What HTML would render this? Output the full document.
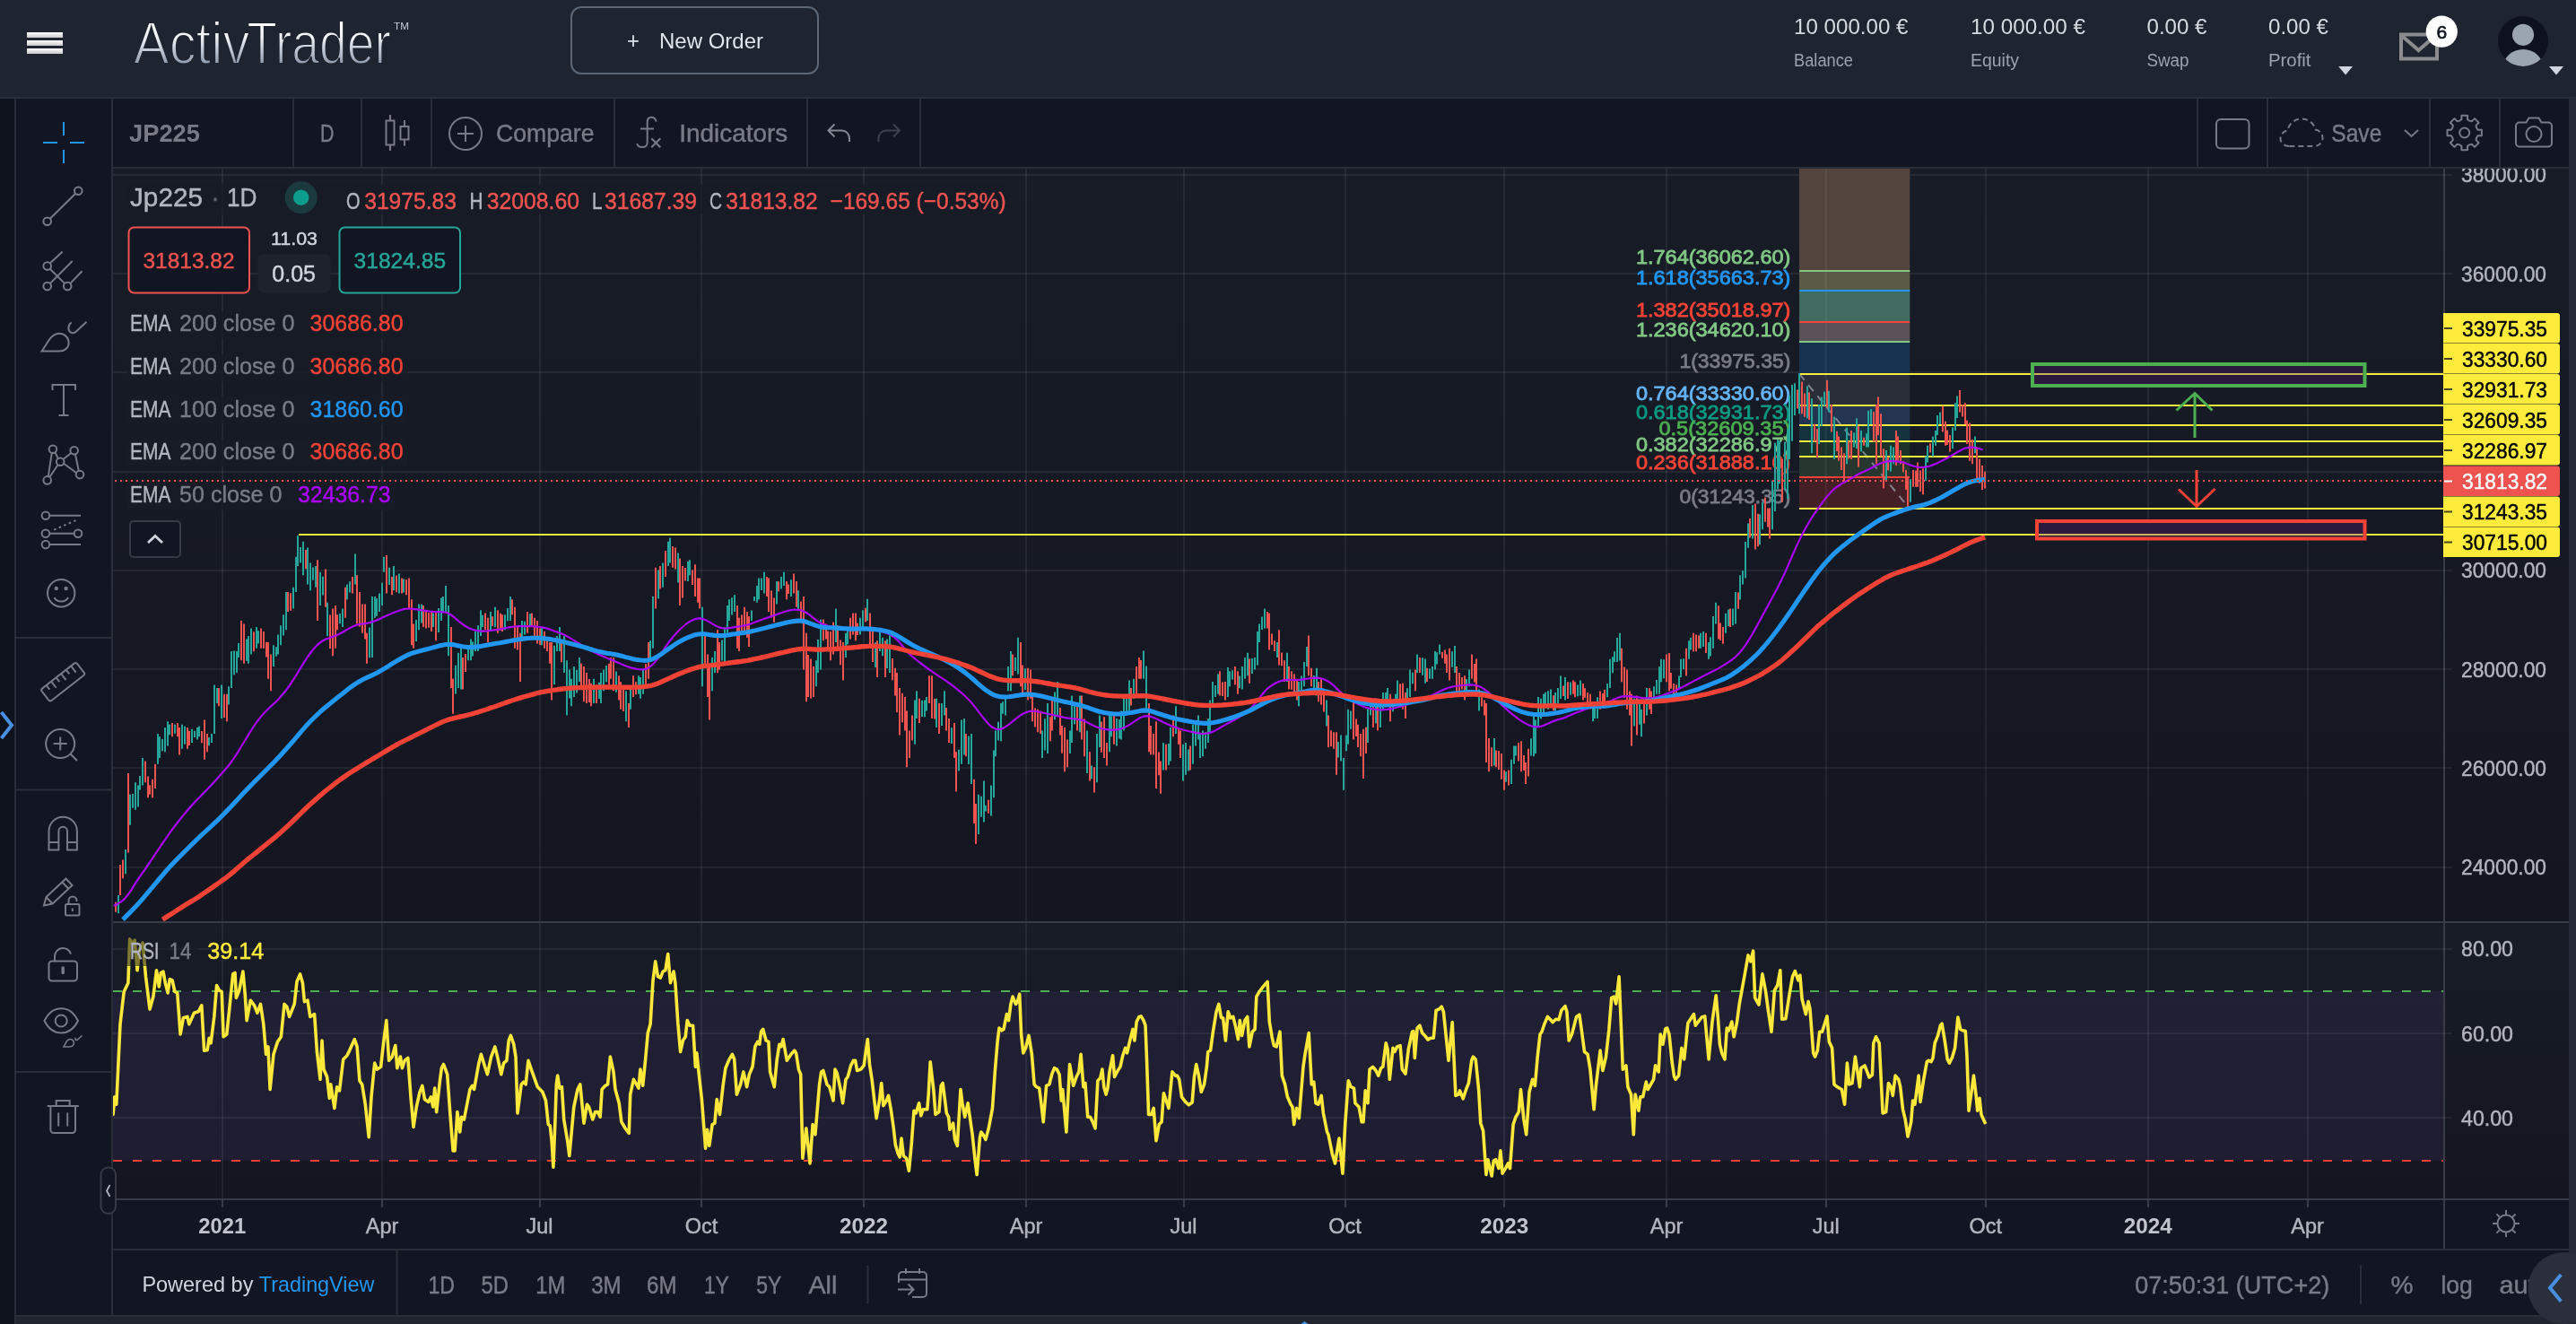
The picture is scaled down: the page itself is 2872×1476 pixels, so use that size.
<!DOCTYPE html>
<html><head><meta charset="utf-8"><title>ActivTrader</title>
<style>html,body{margin:0;padding:0;background:#121622;overflow:hidden}svg{display:block;filter:blur(0px);width:2872px;height:1476px}@media (min-resolution:1.5dppx){svg{width:1436px;height:738px}}text{white-space:pre}</style>
</head><body>
<svg width="2872" height="1476" viewBox="0 0 2872 1476" font-family='"Liberation Sans", sans-serif'>
<defs><linearGradient id="lg" gradientUnits="userSpaceOnUse" x1="0" y1="24" x2="0" y2="73"><stop offset="0" stop-color="#ffffff"/><stop offset="0.35" stop-color="#f2f4f8"/><stop offset="1" stop-color="#8794a9"/></linearGradient><linearGradient id="hb" x1="0" y1="0" x2="0" y2="1"><stop offset="0" stop-color="#ffffff"/><stop offset="1" stop-color="#c9c9c9"/></linearGradient><clipPath id="cpm"><rect x="126" y="188" width="2598" height="839"/></clipPath><clipPath id="cpr"><rect x="126" y="1029" width="2598" height="307"/></clipPath><linearGradient id="pg" x1="0" y1="0" x2="0" y2="1"><stop offset="0" stop-color="#181c27"/><stop offset="1" stop-color="#131621"/></linearGradient><clipPath id="cpax"><rect x="2726" y="188" width="138" height="839"/></clipPath><clipPath id="cpa"><circle cx="2813" cy="46" r="28"/></clipPath></defs>
<rect width="2872" height="1476" fill="#121622"/>
<rect x="0" y="0" width="2872" height="108" fill="#1f2530"/>
<rect x="0" y="108" width="2872" height="2" fill="#2a2e39"/>
<rect x="0" y="110" width="16" height="1366" fill="#0e121c"/>
<rect x="16" y="110" width="2" height="1366" fill="#2a2e39"/>
<rect x="126" y="188" width="2738" height="840" fill="url(#pg)"/>
<rect x="126" y="1028" width="2738" height="310" fill="url(#pg)"/>
<rect x="2864" y="110" width="8" height="1366" fill="#262b37"/>
<rect x="18" y="1468" width="2854" height="8" fill="#20252f"/>
<path d="M1450.500 1476l4-3 4 3z" fill="#4a90e2"/>
<rect x="30" y="36" width="40" height="6" fill="url(#hb)"/>
<rect x="30" y="45" width="40" height="6" fill="url(#hb)"/>
<rect x="30" y="54" width="40" height="6" fill="url(#hb)"/>
<text x="148.8" y="71.3" font-size="66.5" fill="url(#lg)" stroke="#1f2530" stroke-width="2" textLength="129.5" lengthAdjust="spacingAndGlyphs" style="paint-order:fill stroke">Activ</text>
<text x="275.3" y="71.3" font-size="66.5" fill="url(#lg)" stroke="#1f2530" stroke-width="2" textLength="160.5" lengthAdjust="spacingAndGlyphs" style="paint-order:fill stroke">Trader</text>
<text x="439.0" y="33.0" font-size="11" fill="#c9ced8" textLength="17.0" lengthAdjust="spacingAndGlyphs">TM</text>
<rect x="637" y="8" width="275" height="74" rx="11" fill="none" stroke="#5b6676" stroke-width="2"/>
<text x="699.0" y="54.0" font-size="26" fill="#dfe3ea" textLength="14.0" lengthAdjust="spacingAndGlyphs">+</text>
<text x="735.0" y="54.0" font-size="24" fill="#dfe3ea" textLength="116.0" lengthAdjust="spacingAndGlyphs">New Order</text>
<text x="2000.0" y="38.0" font-size="24" fill="#d5d9e0" textLength="127.5" lengthAdjust="spacingAndGlyphs">10 000.00 €</text>
<text x="2000.0" y="74.0" font-size="20" fill="#9aa3b1" textLength="66.0" lengthAdjust="spacingAndGlyphs">Balance</text>
<text x="2197.0" y="38.0" font-size="24" fill="#d5d9e0" textLength="128.0" lengthAdjust="spacingAndGlyphs">10 000.00 €</text>
<text x="2197.0" y="74.0" font-size="20" fill="#9aa3b1" textLength="54.0" lengthAdjust="spacingAndGlyphs">Equity</text>
<text x="2393.5" y="38.0" font-size="24" fill="#d5d9e0" textLength="67.0" lengthAdjust="spacingAndGlyphs">0.00 €</text>
<text x="2393.5" y="74.0" font-size="20" fill="#9aa3b1" textLength="47.0" lengthAdjust="spacingAndGlyphs">Swap</text>
<text x="2529.0" y="38.0" font-size="24" fill="#d5d9e0" textLength="67.0" lengthAdjust="spacingAndGlyphs">0.00 €</text>
<text x="2529.0" y="74.0" font-size="20" fill="#9aa3b1" textLength="47.5" lengthAdjust="spacingAndGlyphs">Profit</text>
<path d="M2607.2 74h15.8l-7.9 9.6z" fill="#d1d5e0"/>
<path d="M2842 74h16l-8 9.6z" fill="#d1d5e0"/>
<rect x="2677" y="38.5" width="40" height="27" fill="none" stroke="#8b8c8e" stroke-width="4"/>
<path d="M2678 40l18.5 16 18.5-16" fill="none" stroke="#8b8c8e" stroke-width="4"/>
<circle cx="2722.3" cy="35.2" r="17.6" fill="#ffffff"/>
<text x="2722.3" y="42.8" font-size="21" fill="#10131f" stroke="#10131f" stroke-width=".7" text-anchor="middle">6</text>
<circle cx="2813" cy="46" r="28" fill="#0e1220"/>
<g clip-path="url(#cpa)" fill="#9aa5b1"><circle cx="2813" cy="38.8" r="12.1"/><ellipse cx="2813" cy="75" rx="22" ry="20"/></g>
<rect x="126" y="186" width="2738" height="2" fill="#2a2e39"/>
<rect x="326" y="110" width="2" height="76" fill="#2a2e39"/>
<rect x="402" y="110" width="2" height="76" fill="#2a2e39"/>
<rect x="480" y="110" width="2" height="76" fill="#2a2e39"/>
<rect x="684" y="110" width="2" height="76" fill="#2a2e39"/>
<rect x="899" y="110" width="2" height="76" fill="#2a2e39"/>
<rect x="1025" y="110" width="2" height="76" fill="#2a2e39"/>
<rect x="2449" y="110" width="2" height="76" fill="#2a2e39"/>
<rect x="2527" y="110" width="2" height="76" fill="#2a2e39"/>
<rect x="2708" y="110" width="2" height="76" fill="#2a2e39"/>
<rect x="2786" y="110" width="2" height="76" fill="#2a2e39"/>
<text x="144.0" y="158.0" font-size="28" fill="#787b86" font-weight="bold" textLength="79.0" lengthAdjust="spacingAndGlyphs">JP225</text>
<text x="357.0" y="158.0" font-size="28" fill="#787b86" stroke="#787b86" stroke-width="0.45" textLength="15.5" lengthAdjust="spacingAndGlyphs">D</text>
<g fill="none" stroke="#787b86" stroke-width="2"><rect x="430.5" y="134.5" width="9" height="27"/><path d="M435 128v6.5M435 161.5v6.5"/><rect x="446.5" y="141" width="9" height="14.5"/><path d="M451 134v7M451 155.5v7"/></g>
<g fill="none" stroke="#787b86" stroke-width="2"><circle cx="519" cy="149" r="18"/><path d="M510 149h18M519 140v18"/></g>
<text x="553.0" y="158.0" font-size="28" fill="#787b86" stroke="#787b86" stroke-width="0.45" textLength="109.5" lengthAdjust="spacingAndGlyphs">Compare</text>
<g fill="none" stroke="#787b86" stroke-width="2"><path d="M731.6 135.7C731 132 728.5 130.7 726 130.7C723 130.7 721.7 133 721.7 136.5V158.5C721.7 162.5 719 164.1 716 164.1C713 164.1 710.8 162.5 710.2 160"/><path d="M714 143.500h15"/><path d="M726.300 154.200l10 10M736.300 154.200l-10 10" stroke-width="2.2"/></g>
<text x="757.3" y="158.0" font-size="28" fill="#787b86" stroke="#787b86" stroke-width="0.45" textLength="121.0" lengthAdjust="spacingAndGlyphs">Indicators</text>
<path d="M930.500 138.500l-7 7 7 7M924 145.500h14c5.500 0 9 4 9 9v3.500" fill="none" stroke="#868993" stroke-width="2"/>
<path d="M996 138.500l7 7-7 7M1002.500 145.500h-14c-5.500 0-9 4-9 9v3.500" fill="none" stroke="#3d414d" stroke-width="2"/>
<rect x="2471" y="133" width="36.5" height="32.5" rx="5" fill="none" stroke="#787b86" stroke-width="2"/>
<path d="M2552 163c-6 0-9.500-4-9.500-8.500 0-5 4-8.500 8-9 1.500-8 8-13 15.500-13 8 0 14 5 15.500 12 5 1 8 4.500 8 9.500 0 5-4 9-9.500 9z" fill="none" stroke="#787b86" stroke-width="2" stroke-dasharray="6 4"/>
<text x="2599.3" y="158.0" font-size="28" fill="#787b86" stroke="#787b86" stroke-width="0.45" textLength="56.0" lengthAdjust="spacingAndGlyphs">Save</text>
<path d="M2681 145l7.500 7 7.500-7" fill="none" stroke="#787b86" stroke-width="2"/>
<path d="M2742.2 134.6L2744.4 133.2L2744.4 128.8L2751.0 128.8L2751.0 133.2L2753.2 134.6L2753.3 134.6L2755.8 135.2L2759.0 132.1L2763.6 136.7L2760.5 139.9L2761.1 142.4L2761.1 142.5L2762.5 144.7L2766.9 144.7L2766.9 151.3L2762.5 151.3L2761.1 153.5L2761.1 153.6L2760.5 156.1L2763.6 159.3L2759.0 163.9L2755.8 160.8L2753.3 161.4L2753.2 161.4L2751.0 162.8L2751.0 167.2L2744.4 167.2L2744.4 162.8L2742.2 161.4L2742.1 161.4L2739.6 160.8L2736.4 163.9L2731.8 159.3L2734.9 156.1L2734.3 153.6L2734.3 153.5L2732.9 151.3L2728.5 151.3L2728.5 144.7L2732.9 144.7L2734.3 142.5L2734.3 142.4L2734.9 139.9L2731.8 136.7L2736.4 132.1L2739.6 135.2L2742.1 134.6z" fill="none" stroke="#787b86" stroke-width="2" stroke-linejoin="round"/>
<circle cx="2747.7" cy="148" r="5.500" fill="none" stroke="#787b86" stroke-width="2"/>
<path d="M2809 136.500h7.500l3-5h11l3 5h7.500a4 4 0 0 1 4 4v19a4 4 0 0 1-4 4h-32a4 4 0 0 1-4-4v-19a4 4 0 0 1 4-4z" fill="none" stroke="#787b86" stroke-width="2"/>
<circle cx="2825" cy="149.500" r="8.500" fill="none" stroke="#787b86" stroke-width="2"/>
<rect x="124" y="110" width="2" height="1356" fill="#2a2e39"/>
<rect x="18" y="710" width="106" height="2" fill="#2a2e39"/>
<rect x="18" y="879.5" width="106" height="2" fill="#2a2e39"/>
<rect x="18" y="1194" width="106" height="2" fill="#2a2e39"/>
<path d="M71 136v15M71 167v15M48 159h16M78 159h16" stroke="#2196f3" stroke-width="2" fill="none"/>
<g fill="none" stroke="#787b86" stroke-width="2"><circle cx="87.300" cy="212.800" r="4.300"/><circle cx="52.700" cy="246.700" r="4.300"/><path d="M84.200 215.800L55.800 243.700"/></g>
<g fill="none" stroke="#787b86" stroke-width="2"><circle cx="52.700" cy="296.600" r="4.300"/><circle cx="52.700" cy="319.100" r="4.300"/><circle cx="75.200" cy="319.100" r="4.300"/><path d="M55.700 293.600L69.700 280.500M55.700 316.100L80.700 291M78.200 316.100L91.500 302.300M55.700 299.800L72.200 316.100"/></g>
<g fill="none" stroke="#787b86" stroke-width="2"><path d="M46.500 391.500H66C73 391.500 77.500 386.500 76.500 380.500C75.500 374.500 70 371 64 372C56 373.500 53 383 46.500 391.500Z"/><path d="M79.700 359.500C75.500 362 75 369 80 371C82 371.800 84 370.500 85.500 369L96.500 358.700"/></g>
<g fill="none" stroke="#787b86" stroke-width="2"><path d="M58.500 435v-6h25.500v6M71 429v34M65.500 463h11"/></g>
<g fill="none" stroke="#787b86" stroke-width="2"><circle cx="58.900" cy="500.800" r="4.300"/><circle cx="82.700" cy="502.300" r="4.300"/><circle cx="67.200" cy="514.800" r="4.300"/><circle cx="52.700" cy="535.400" r="4.300"/><circle cx="89" cy="529.100" r="4.300"/><path d="M57.800 505L53.800 531.200M61.500 504.300L64.800 511.300M70.500 512L79.300 505M84 506.500L87.800 525M71 516.800L85 527M64.500 518.300L55.300 532"/></g>
<g fill="none" stroke="#787b86" stroke-width="2"><circle cx="50.900" cy="574.800" r="4.300"/><circle cx="50.900" cy="594.800" r="4.300"/><circle cx="87" cy="594.800" r="4.300"/><circle cx="50.900" cy="607.100" r="4.300"/><path d="M55.200 574.800H90M55.200 594.800H82.700M55.200 607.100H90"/><path d="M60.200 590.600L86.500 579.300" stroke-dasharray="2.500 3.500"/></g>
<g fill="none" stroke="#787b86" stroke-width="2"><circle cx="68.200" cy="661.300" r="15.200"/><path d="M60.500 666c3 6 12.500 6 15.500 0"/></g><circle cx="62.800" cy="656" r="2.200" fill="#787b86"/><circle cx="73.600" cy="656" r="2.200" fill="#787b86"/>
<g fill="none" stroke="#787b86" stroke-width="2" transform="translate(70.200 760.200) rotate(-38)"><rect x="-25" y="-8.500" width="50" height="17" rx="2.500"/><path d="M-17 -8.500v6M-10 -8.500v9M-3 -8.500v6M4 -8.500v9M11 -8.500v6M18 -8.500v9"/></g>
<g fill="none" stroke="#787b86" stroke-width="2"><circle cx="67.200" cy="829.100" r="16"/><path d="M59.700 829.100h15M67.200 821.600v15M78.800 840.700L86 848"/></g>
<g fill="none" stroke="#787b86" stroke-width="2"><path d="M54.500 947.500v-21a15.700 15.700 0 0 1 31.400 0v21h-10.900v-21a4.800 4.800 0 0 0-9.600 0v21z"/><path d="M54.500 939h10.900M75 939h10.900"/></g>
<g fill="none" stroke="#787b86" stroke-width="2"><path d="M49 1009.500l2.500-9.500 22-20.500 7 7.500-22 20.500z"/><path d="M51.500 1000l7 7.500M69.500 983.500l7 7.500"/><rect x="73" y="1008" width="15.500" height="12.500" rx="1.500" fill="#121622"/><path d="M76.500 1008v-4a4.500 4.500 0 0 1 9 0v1"/><path d="M80.800 1012.500v3.500"/></g>
<g fill="none" stroke="#787b86" stroke-width="2"><rect x="54.500" y="1071.500" width="31.500" height="22" rx="3.500"/><path d="M61 1071.500v-5.500a9.200 9.200 0 0 1 18 -2.500"/><path d="M70.200 1079v5.500" stroke-width="3.500" stroke-linecap="round"/></g>
<g fill="none" stroke="#787b86" stroke-width="2"><path d="M49.500 1138c9-18.500 28.500-18.500 37.500 0-9 18-28.500 18-37.500 0z"/><circle cx="68.200" cy="1138" r="6.500"/><path d="M71 1167h6.500c4.500 0 5.500-3.500 4.500-6-1.500-3.500-5.500-3-7.500-0.500z" stroke-width="1.600"/><path d="M84.500 1157c-1.500 1 0 3.500 2 2l5-4.500" stroke-width="1.600"/></g>
<g fill="none" stroke="#787b86" stroke-width="2"><path d="M52.700 1233h35.100M62.700 1233v-6h15v6M56.400 1233v26.500a3.500 3.500 0 0 0 3.500 3.500h20.600a3.500 3.500 0 0 0 3.500-3.500v-26.500M65.200 1240.500v15M75.200 1240.500v15"/></g>
<path d="M1.500 794l11.500 14.500-11.500 14.500" fill="none" stroke="#4a90e2" stroke-width="4"/>
<rect x="126" y="1027" width="2738" height="2" fill="#383c48"/>
<rect x="126" y="1336" width="2738" height="2" fill="#383c48"/>
<rect x="126" y="1392" width="2738" height="2" fill="#2a2e39"/>
<rect x="2724" y="188" width="2" height="1204" fill="#383c48"/>
<rect x="126" y="1338" width="2738" height="54" fill="#121622"/>
<rect x="126" y="1394" width="2738" height="72" fill="#121622"/>
<rect x="2724" y="1338" width="2" height="54" fill="#383c48"/>
<rect x="18" y="1466" width="2846" height="2" fill="#2a2e39"/>
<path d="M248 1338V1346M426 1338V1346M602 1338V1346M782 1338V1346M963 1338V1346M1144 1338V1346M1320 1338V1346M1500 1338V1346M1677 1338V1346M1858 1338V1346M2036 1338V1346M2214 1338V1346M2395 1338V1346M2573 1338V1346" stroke="#383c48" stroke-width="2" fill="none"/>
<rect x="126" y="1105.0" width="2598" height="188.7" fill="#7e57c2" fill-opacity="0.1"/>
<path d="M248 188V1027M248 1029V1336M426 188V1027M426 1029V1336M602 188V1027M602 1029V1336M782 188V1027M782 1029V1336M963 188V1027M963 1029V1336M1144 188V1027M1144 1029V1336M1320 188V1027M1320 1029V1336M1500 188V1027M1500 1029V1336M1677 188V1027M1677 1029V1336M1858 188V1027M1858 1029V1336M2036 188V1027M2036 1029V1336M2214 188V1027M2214 1029V1336M2395 188V1027M2395 1029V1336M2573 188V1027M2573 1029V1336" stroke="#ffffff" stroke-opacity="0.062" stroke-width="2" fill="none"/>
<path d="M126 967H2734M126 856H2734M126 746H2734M126 636H2734M126 526H2734M126 415H2734M126 305H2734M126 195H2734M126 1058H2734M126 1152H2734M126 1246H2734" stroke="#ffffff" stroke-opacity="0.062" stroke-width="2" fill="none"/>
<path d="M126 1105H2724" stroke="#4caf50" stroke-width="2" stroke-dasharray="10 12" fill="none"/>
<path d="M126 1294H2724" stroke="#f44336" stroke-width="2" stroke-dasharray="10 12" fill="none"/>
<g clip-path="url(#cpm)">
<rect x="2006" y="188.0" width="123.3" height="113.7" fill="#53453d"/>
<rect x="2006" y="301.7" width="123.3" height="22.0" fill="#5a5b47"/>
<rect x="2006" y="323.7" width="123.3" height="35.5" fill="#416a62"/>
<rect x="2006" y="359.2" width="123.3" height="22.0" fill="#5a5057"/>
<rect x="2006" y="381.2" width="123.3" height="35.5" fill="#17334f"/>
<rect x="2006" y="416.7" width="123.3" height="35.5" fill="#2a2e39"/>
<rect x="2006" y="452.3" width="123.3" height="22.0" fill="#243551"/>
<rect x="2006" y="474.3" width="123.3" height="17.8" fill="#14333f"/>
<rect x="2006" y="492.0" width="123.3" height="17.8" fill="#1d3229"/>
<rect x="2006" y="509.8" width="123.3" height="22.0" fill="#283630"/>
<rect x="2006" y="531.8" width="123.3" height="35.5" fill="#442026"/>
<path d="M2035.800 188V567.4" stroke="#ffffff" stroke-opacity="0.06" stroke-width="2"/>
<path d="M2006 302H2129.3" stroke="#81c784" stroke-width="2"/>
<path d="M2006 324H2129.3" stroke="#2196f3" stroke-width="2"/>
<path d="M2006 359H2129.3" stroke="#f44336" stroke-width="2"/>
<path d="M2006 381H2129.3" stroke="#81c784" stroke-width="2"/>
<path d="M2006 532H2129.3" stroke="#f44336" stroke-width="2"/>
<path d="M2006 416.7L2129.3 567.4" stroke="#9598a1" stroke-width="2" stroke-dasharray="9 7" opacity="0.8"/>
</g>
<text x="1996.4" y="294.2" font-size="22" fill="#81c784" stroke="#81c784" stroke-width="0.8" text-anchor="end" textLength="172.5" lengthAdjust="spacingAndGlyphs">1.764(36062.60)</text>
<text x="1996.4" y="316.8" font-size="22" fill="#2196f3" stroke="#2196f3" stroke-width="0.8" text-anchor="end" textLength="172.5" lengthAdjust="spacingAndGlyphs">1.618(35663.73)</text>
<text x="1996.4" y="353.0" font-size="22" fill="#f44336" stroke="#f44336" stroke-width="0.8" text-anchor="end" textLength="172.5" lengthAdjust="spacingAndGlyphs">1.382(35018.97)</text>
<text x="1996.4" y="374.8" font-size="22" fill="#81c784" stroke="#81c784" stroke-width="0.8" text-anchor="end" textLength="172.5" lengthAdjust="spacingAndGlyphs">1.236(34620.10)</text>
<text x="1996.4" y="409.6" font-size="22" fill="#787b86" stroke="#787b86" stroke-width="0.8" text-anchor="end" textLength="124.0" lengthAdjust="spacingAndGlyphs">1(33975.35)</text>
<text x="1996.4" y="445.8" font-size="22" fill="#64b5f6" stroke="#64b5f6" stroke-width="0.8" text-anchor="end" textLength="172.5" lengthAdjust="spacingAndGlyphs">0.764(33330.60)</text>
<text x="1996.4" y="467.1" font-size="22" fill="#089981" stroke="#089981" stroke-width="0.8" text-anchor="end" textLength="172.5" lengthAdjust="spacingAndGlyphs">0.618(32931.73)</text>
<text x="1996.4" y="484.9" font-size="22" fill="#4caf50" stroke="#4caf50" stroke-width="0.8" text-anchor="end" textLength="147.0" lengthAdjust="spacingAndGlyphs">0.5(32609.35)</text>
<text x="1996.4" y="503.0" font-size="22" fill="#81c784" stroke="#81c784" stroke-width="0.8" text-anchor="end" textLength="172.5" lengthAdjust="spacingAndGlyphs">0.382(32286.97)</text>
<text x="1996.4" y="523.3" font-size="22" fill="#f44336" stroke="#f44336" stroke-width="0.8" text-anchor="end" textLength="172.5" lengthAdjust="spacingAndGlyphs">0.236(31888.10)</text>
<text x="1996.4" y="560.9" font-size="22" fill="#787b86" stroke="#787b86" stroke-width="0.8" text-anchor="end" textLength="124.0" lengthAdjust="spacingAndGlyphs">0(31243.35)</text>
<g clip-path="url(#cpm)">
<path d="M2006 417H2724M2006 452H2724M2006 474H2724M2006 492H2724M2006 509H2724M2006 567H2724M333 596H2724" stroke="#ffeb3b" stroke-width="2" fill="none"/>
<path d="M132 997.9V1018.3M140 947.0V974.2M145 885.8V919.8M148 884.9V900.7M151 872.2V902.8M154 875.6V899.4M156 865.1V880.4M159 845.0V875.6M176 817.9V851.8M178 821.3V845.0M181 824.0V837.3M184 811.1V838.2M187 804.3V831.4M189 807.8V819.3M195 807.8V817.7M203 807.7V834.8M206 809.8V829.8M214 812.8V828.0M217 814.8V821.9M220 811.1V824.6M222 809.4V821.3M233 822.0V831.3M236 817.9V828.0M239 763.5V817.9M242 766.9V783.9M247 763.5V800.9M255 765.2V785.6M258 726.1V766.9M261 725.4V752.3M264 726.1V749.9M266 717.1V732.9M275 712.6V736.8M277 709.1V739.7M280 700.6V729.5M286 698.9V722.7M288 703.2V717.6M305 719.3V743.1M308 721.2V731.7M310 707.4V729.5M313 697.2V719.3M316 685.3V708.6M319 659.9V702.3M327 654.8V678.5M330 620.8V659.9M332 597.0V631.0M335 610.1V627.6M338 603.8V641.2M343 610.6V651.4M346 627.6V658.2M349 632.4V646.7M352 631.0V654.8M357 637.8V675.1M360 642.8V663.4M365 671.7V709.1M379 683.9V695.3M382 678.5V698.9M387 651.4V668.3M390 648.3V660.5M396 617.4V651.4M412 699.6V733.2M415 664.9V732.9M418 664.9V688.7M420 666.9V686.7M423 661.5V681.9M426 649.7V675.1M428 620.8V637.8M434 632.8V651.9M439 631.0V658.2M445 639.5V661.5M450 645.5V660.5M464 691.0V714.9M467 673.4V702.3M470 673.7V694.6M483 683.6V698.9M489 678.1V704.9M492 666.6V692.1M494 664.9V681.9M497 653.1V681.9M500 675.1V731.2M508 741.7V773.4M511 727.8V766.9M514 721.0V768.6M522 719.3V736.3M525 712.5V736.3M527 715.6V731.4M530 704.0V726.1M533 697.2V726.1M536 680.2V709.1M538 685.7V699.0M547 681.9V702.3M552 676.8V698.9M563 685.3V702.3M566 678.1V692.3M569 664.9V692.1M582 692.1V712.5M585 692.7V707.4M591 684.3V697.4M604 698.9V719.3M618 719.8V763.0M621 709.1V726.1M624 698.9V726.1M629 709.1V749.9M632 736.3V797.5M635 746.6V778.5M637 756.7V787.3M640 743.1V777.1M643 746.9V772.6M646 732.9V760.1M662 756.7V783.9M668 760.8V779.0M670 749.9V783.9M673 746.5V770.3M676 741.9V760.3M687 748.6V771.8M698 770.3V804.3M703 766.9V790.7M712 753.3V773.7M714 755.0V778.8M717 746.5V773.7M725 714.2V732.9M728 664.9V722.7M734 635.6V667.3M739 627.6V654.8M745 603.8V631.0M747 599.7V627.6M756 616.4V649.4M767 625.9V648.0M769 624.2V641.2M783 676.8V765.2M794 732.9V770.3M797 726.1V749.9M805 713.6V736.6M808 698.9V739.7M811 675.1V705.7M813 668.3V692.1M816 666.2V685.4M819 663.2V681.9M838 680.4V691.9M841 664.9V670.0M844 653.1V671.7M846 644.6V668.3M849 644.6V657.9M852 637.8V661.5M866 648.0V673.4M871 642.9V656.5M874 637.8V653.1M882 646.3V664.9M890 658.2V680.2M910 736.3V765.2M912 713.1V750.1M915 690.4V746.5M932 678.5V715.9M943 705.7V732.9M945 699.3V718.2M959 688.7V707.4M962 680.2V698.9M967 667.7V692.1M976 716.3V744.0M981 702.3V726.1M984 710.8V731.2M989 712.5V745.0M992 705.7V749.9M1020 780.5V829.7M1022 770.3V800.9M1028 780.8V799.0M1031 780.5V799.2M1033 777.1V792.4M1044 778.8V811.1M1050 784.0V809.0M1053 770.3V797.5M1061 811.3V829.0M1069 835.7V859.6M1072 802.6V851.8M1075 800.9V841.6M1080 820.4V851.9M1083 817.9V873.9M1091 885.8V930.0M1094 887.7V910.8M1097 870.5V916.4M1099 897.7V904.5M1105 875.6V909.6M1108 836.5V889.2M1110 814.5V843.3M1113 804.8V825.6M1116 783.9V826.3M1118 782.2V795.8M1121 777.1V797.5M1124 743.1V770.3M1127 726.1V770.3M1132 732.8V748.0M1135 710.8V751.6M1143 745.3V769.0M1162 814.5V845.0M1165 801.2V836.5M1168 783.9V839.9M1176 771.6V802.2M1179 760.1V797.5M1193 814.5V839.9M1195 775.4V828.0M1198 784.9V807.6M1204 775.4V816.2M1212 814.5V862.0M1217 853.5V868.3M1223 817.9V872.2M1226 797.5V833.1M1237 797.5V838.2M1239 798.3V821.3M1245 800.9V831.4M1248 802.0V823.4M1250 792.4V824.6M1253 775.4V814.5M1256 773.7V797.5M1259 758.4V792.4M1264 756.7V778.8M1275 725.4V756.7M1278 742.4V794.1M1297 828.0V858.6M1303 829.0V852.9M1305 811.1V848.4M1311 787.3V817.9M1319 829.7V870.5M1322 828.0V863.7M1325 835.5V859.5M1330 807.7V851.8M1333 806.3V831.5M1336 797.5V824.6M1338 817.9V845.0M1341 814.5V843.3M1344 816.3V834.7M1347 800.9V828.0M1349 780.5V817.9M1352 760.1V783.9M1355 764.1V777.0M1358 751.6V773.7M1369 744.1V777.1M1371 748.2V765.2M1374 747.2V757.5M1382 753.4V767.2M1385 743.1V768.6M1388 732.9V756.7M1391 727.8V753.3M1396 734.0V750.9M1399 732.9V746.5M1402 704.0V741.4M1404 695.5V715.9M1407 687.6V702.0M1410 678.5V700.6M1424 715.9V732.9M1435 727.8V760.1M1448 760.1V787.3M1451 753.5V773.9M1454 738.0V765.2M1457 721.0V743.1M1465 753.1V768.3M1468 744.8V775.4M1479 780.5V809.4M1492 827.0V844.4M1495 819.6V848.4M1498 845.0V880.7M1501 819.8V837.3M1503 790.7V829.7M1506 792.4V812.8M1525 789.0V828.0M1528 780.5V797.5M1534 780.4V806.2M1539 783.9V811.1M1542 772.0V790.7M1545 771.9V783.1M1547 766.9V783.9M1553 781.1V793.3M1556 773.7V787.3M1558 758.4V783.9M1569 767.2V781.5M1572 746.5V777.1M1575 749.7V762.3M1580 729.5V749.9M1586 733.3V752.7M1589 734.6V761.8M1594 745.6V756.8M1597 743.1V756.7M1600 726.1V746.5M1602 727.2V740.4M1605 718.6V729.5M1619 726.2V743.7M1622 720.0V749.9M1635 757.0V769.7M1638 746.5V765.2M1649 768.6V792.4M1666 822.9V853.5M1679 860.2V871.8M1685 846.7V873.9M1688 831.4V851.8M1690 831.6V842.6M1707 823.3V842.5M1710 797.5V843.3M1712 802.6V839.9M1715 777.1V811.1M1718 778.7V801.3M1721 773.7V794.1M1723 771.7V789.6M1726 770.3V790.7M1729 768.6V789.0M1734 772.0V792.4M1737 766.9V783.9M1740 753.4V778.9M1745 755.1V780.6M1751 760.4V774.7M1759 763.6V776.2M1762 758.5V775.5M1776 784.0V804.3M1778 786.2V801.0M1781 777.2V801.0M1792 761.9V777.2M1795 734.7V767.0M1798 732.2V750.2M1800 726.2V738.1M1803 710.9V738.1M1806 705.8V736.4M1822 778.5V809.5M1828 780.6V807.7M1830 790.8V821.3M1836 767.0V797.6M1844 765.3V780.6M1847 758.0V773.7M1850 743.2V773.8M1852 734.7V760.2M1855 735.2V756.2M1872 753.4V767.0M1874 734.7V755.1M1877 734.2V746.0M1883 714.3V734.7M1885 710.8V724.6M1896 705.8V722.8M1899 704.1V721.1M1905 716.0V734.7M1907 710.3V731.6M1910 687.1V722.8M1913 671.8V695.6M1924 683.7V705.8M1927 679.6V698.0M1932 678.6V697.3M1935 659.9V695.6M1940 641.3V668.4M1943 636.2V651.4M1946 603.9V644.6M1949 583.5V610.7M1954 563.1V600.5M1962 573.3V607.3M1965 559.7V590.3M1976 535.9V590.3M1979 493.4V569.9M1982 490.0V545.3M1984 491.7V539.3M1990 492.4V546.5M1993 478.2V556.3M1995 440.8V512.1M1998 428.9V491.7M2001 427.2V462.9M2006 416.0V461.2M2015 430.6V466.3M2020 444.2V505.3M2028 451.0V495.1M2031 442.5V474.8M2034 436.7V452.6M2039 435.7V459.5M2045 464.6V512.1M2059 476.5V517.2M2067 482.2V498.6M2070 466.3V500.2M2075 479.9V503.6M2081 483.2V498.5M2083 457.8V498.5M2086 456.1V473.1M2103 501.9V535.9M2108 496.8V525.7M2111 498.5V517.2M2130 534.2V559.7M2147 508.7V535.9M2149 496.8V515.5M2155 486.6V508.7M2158 479.9V496.8M2160 462.9V484.9M2163 459.5V473.1M2177 476.5V500.2M2180 449.3V479.9M2182 441.6V466.0M2202 486.6V505.3" stroke="#26a69a" stroke-width="2" fill="none"/>
<path d="M129 1005.8V1016.7M134 964.0V997.9M137 958.4V979.3M143 862.0V950.4M162 848.4V872.2M165 865.4V889.2M167 875.2V885.7M170 868.8V889.2M173 851.8V879.0M192 806.0V821.3M198 806.0V821.3M200 811.1V841.6M209 811.1V834.8M211 814.8V831.1M225 814.9V828.3M228 802.6V846.7M231 817.9V838.2M244 767.1V787.3M250 773.8V800.0M253 773.7V804.3M269 692.1V736.3M272 695.5V739.7M283 704.2V726.3M291 700.6V722.7M294 704.0V722.7M297 715.8V732.6M299 715.9V756.7M302 729.5V770.3M321 659.9V681.9M324 661.3V680.8M341 612.9V634.3M354 624.2V692.1M363 634.4V676.8M368 685.5V722.9M371 678.5V731.2M374 675.1V722.7M376 685.3V702.3M385 654.8V688.7M393 642.9V661.5M398 641.2V695.5M401 660.0V698.5M404 673.4V705.7M407 673.4V712.5M409 705.7V739.7M431 619.1V661.5M437 642.9V663.2M442 641.5V660.3M448 644.6V661.5M453 646.3V663.2M456 644.6V678.5M459 668.3V719.3M461 695.5V722.7M472 675.1V698.9M475 680.2V700.6M478 683.1V699.8M481 681.9V704.0M486 681.9V714.2M503 698.9V766.9M505 756.7V795.8M516 732.9V768.6M519 729.0V748.9M541 683.6V702.3M544 688.7V715.9M549 687.3V698.1M555 680.2V705.7M558 683.7V702.8M560 685.3V704.0M571 668.3V685.3M574 676.8V722.7M577 698.7V724.5M580 705.7V760.1M588 681.9V705.7M593 683.6V698.9M596 688.7V709.1M599 692.1V717.6M602 700.4V718.8M607 704.0V722.7M610 712.3V726.1M613 715.9V739.7M615 715.9V780.5M626 714.0V738.2M648 739.6V765.2M651 743.1V782.2M654 749.9V783.9M657 757.1V783.0M659 761.8V787.3M665 763.5V783.9M679 739.7V763.5M681 732.9V756.7M684 732.9V770.3M690 753.3V780.5M692 760.1V790.7M695 764.0V792.9M701 783.9V811.1M706 753.3V777.1M709 760.0V774.2M720 740.3V763.6M723 715.9V756.7M731 632.7V678.5M736 631.0V656.5M742 614.0V642.9M750 608.9V632.7M753 610.6V634.4M758 622.5V675.1M761 631.0V666.6M764 632.9V647.5M772 635.4V652.1M775 629.3V664.9M778 644.6V671.7M780 644.6V678.5M786 705.8V745.1M789 729.5V777.1M791 739.7V802.6M800 702.3V749.9M802 715.9V746.5M822 675.1V722.7M824 688.7V726.1M827 685.6V705.6M830 676.8V704.0M833 681.9V710.8M835 687.0V721.0M855 642.9V664.9M857 644.6V681.9M860 658.5V688.6M863 666.6V693.8M868 648.2V659.3M877 648.0V668.3M879 651.5V662.0M885 639.5V661.5M888 648.0V676.8M893 670.5V691.5M896 664.9V746.5M899 705.7V782.2M901 730.0V776.9M904 734.6V778.8M907 743.1V777.1M918 690.4V714.2M921 695.5V712.5M923 703.4V725.4M926 704.0V736.3M929 693.8V729.5M934 697.2V721.0M937 713.4V741.3M940 715.9V758.4M948 688.7V712.5M951 683.6V707.4M954 683.6V714.2M956 694.7V707.9M965 677.8V693.6M970 683.6V722.7M973 698.9V738.0M978 714.2V755.0M987 714.2V755.0M995 734.1V758.2M998 744.8V775.4M1000 749.9V794.1M1003 766.9V819.6M1006 772.8V805.3M1009 777.1V814.5M1011 792.4V855.2M1014 814.5V845.0M1017 797.4V825.6M1025 778.8V806.0M1036 753.3V783.9M1039 753.3V800.9M1042 779.0V801.4M1047 783.9V817.9M1055 789.0V814.5M1058 800.9V828.0M1064 806.0V845.0M1066 838.2V882.4M1077 817.9V843.3M1086 868.8V918.1M1088 896.0V940.9M1102 891.8V906.7M1129 729.5V753.3M1138 715.9V765.2M1140 741.4V775.4M1146 744.8V780.5M1149 746.5V778.8M1151 772.0V804.3M1154 789.5V810.5M1157 790.7V816.2M1160 792.4V817.9M1171 799.2V826.3M1173 780.5V814.5M1182 789.0V819.6M1184 809.0V839.7M1187 811.1V860.3M1190 824.6V855.2M1201 783.9V814.5M1206 775.4V824.6M1209 801.5V843.2M1215 838.2V870.5M1220 855.2V883.4M1228 804.4V838.8M1231 799.2V845.0M1234 828.0V853.5M1242 794.1V829.7M1261 767.1V786.5M1267 743.1V775.4M1270 732.9V756.7M1272 736.0V756.8M1281 783.9V838.2M1283 808.9V841.3M1286 817.9V841.6M1289 804.3V879.0M1292 838.4V864.2M1294 848.4V884.8M1300 829.7V858.6M1308 797.5V821.3M1314 812.8V829.7M1316 814.5V845.0M1327 831.4V858.6M1360 748.2V775.4M1363 760.6V776.1M1366 760.1V780.5M1377 743.1V763.5M1380 748.2V773.7M1393 734.6V761.8M1413 681.9V700.6M1415 683.6V724.4M1418 706.5V718.8M1421 714.2V726.1M1426 702.3V741.4M1429 727.4V742.2M1432 736.3V760.1M1437 743.1V768.6M1440 748.2V768.7M1443 751.6V773.7M1446 756.7V780.5M1459 708.4V753.3M1462 744.8V765.2M1470 760.1V782.2M1473 756.7V785.6M1476 769.8V793.4M1481 797.5V833.1M1484 814.3V832.0M1487 816.2V834.8M1490 816.2V863.7M1509 782.2V824.6M1512 801.4V821.0M1514 807.7V833.1M1517 817.9V843.3M1520 812.8V868.1M1523 810.7V840.0M1531 782.2V811.1M1536 783.9V814.5M1550 773.7V804.3M1561 762.3V781.9M1564 761.8V790.7M1567 772.0V800.9M1578 746.5V770.3M1583 732.9V749.9M1591 744.8V760.1M1608 726.8V733.7M1611 724.4V739.7M1613 729.5V749.9M1616 722.7V758.4M1624 743.1V772.0M1627 749.9V770.3M1630 754.9V768.4M1633 753.3V780.5M1641 729.5V756.7M1644 740.0V760.5M1646 734.6V770.3M1652 775.2V787.5M1655 780.5V797.5M1657 783.9V850.1M1660 822.9V860.3M1663 833.3V854.4M1668 836.5V855.2M1671 837.0V858.0M1674 839.9V868.8M1677 858.6V880.7M1682 858.6V875.6M1693 828.0V848.4M1696 826.3V860.3M1699 842.0V859.0M1701 850.1V873.9M1704 834.8V865.4M1732 775.2V792.3M1743 764.5V776.0M1748 760.2V778.9M1754 758.5V773.8M1756 760.2V777.2M1765 761.9V780.6M1767 767.2V777.8M1770 772.1V784.0M1773 773.8V782.3M1784 770.4V790.8M1787 773.0V788.3M1789 768.7V784.0M1808 722.8V760.2M1811 743.6V777.8M1814 746.6V790.8M1817 770.4V797.6M1819 773.8V831.5M1825 775.5V819.6M1833 785.0V806.5M1839 767.0V790.8M1841 770.4V795.9M1858 729.6V760.2M1861 727.9V770.4M1863 749.9V767.8M1866 761.9V777.2M1869 763.6V777.2M1880 722.8V753.4M1888 705.8V726.2M1891 707.5V726.2M1894 708.5V722.8M1902 705.8V727.9M1916 675.2V712.6M1918 694.4V714.0M1921 699.0V717.7M1929 678.6V699.0M1938 660.6V678.7M1951 578.1V599.5M1957 561.4V612.4M1960 572.8V609.2M1968 554.6V581.8M1971 566.5V587.5M1973 566.5V600.5M1987 512.1V559.7M2004 434.4V455.6M2009 425.5V461.2M2012 438.4V464.8M2017 437.4V468.0M2023 472.7V492.6M2026 478.2V510.4M2037 423.8V454.4M2042 451.0V481.5M2048 480.7V502.9M2050 486.6V513.8M2053 498.5V524.0M2056 505.3V537.6M2061 491.8V511.4M2064 479.9V512.1M2072 474.8V520.6M2078 487.7V496.8M2089 459.0V492.5M2092 451.0V517.2M2094 442.5V484.9M2097 461.2V508.7M2100 500.2V544.4M2105 509.5V524.2M2114 479.9V518.9M2116 486.6V513.8M2119 501.9V517.2M2122 514.2V526.3M2125 524.0V546.1M2127 530.8V566.5M2133 524.0V542.7M2136 524.4V542.9M2138 515.5V542.7M2141 524.5V548.0M2144 522.3V551.2M2152 494.2V504.5M2166 452.7V481.5M2169 469.7V496.8M2171 479.6V495.9M2174 484.9V503.6M2185 435.0V459.5M2188 451.0V464.6M2191 449.3V473.1M2193 468.8V495.1M2196 471.4V513.8M2199 490.0V517.2M2204 498.5V534.2M2207 511.6V538.8M2210 518.9V546.1M2213 525.7V544.4" stroke="#ef5350" stroke-width="2" fill="none"/>
<path d="M126.8 1009.8L130.8 1007.8L134.8 1005.4L138.8 1002.1L142.8 997.3L146.8 991.3L150.8 984.9L154.8 978.9L158.8 973.2L162.8 967.5L166.8 961.7L170.8 955.7L174.8 949.7L178.8 943.7L182.8 937.8L186.8 932.0L190.8 926.4L194.8 921.0L198.8 915.8L202.8 910.9L206.8 906.0L210.8 901.3L214.8 896.8L218.8 892.5L222.8 888.4L226.8 884.3L230.8 880.2L234.8 876.0L238.8 871.7L242.8 867.3L246.8 862.8L250.8 858.3L254.8 853.5L258.8 848.2L262.8 842.3L266.8 835.9L270.8 829.3L274.8 822.7L278.8 816.2L282.8 810.0L286.8 804.2L290.8 799.1L294.8 794.5L298.8 790.5L302.8 786.8L306.8 783.1L310.8 779.1L314.8 774.6L318.8 769.7L322.8 764.2L326.8 758.2L330.8 751.8L334.8 745.2L338.8 738.7L342.8 732.5L346.8 727.0L350.8 722.1L354.8 718.0L358.8 715.0L362.8 712.8L366.8 711.3L370.8 709.9L374.8 708.3L378.8 706.5L382.8 704.3L386.8 701.9L390.8 699.7L394.8 697.8L398.8 696.4L402.8 695.7L406.8 695.2L410.8 694.5L414.8 693.4L418.8 691.9L422.8 690.2L426.8 688.3L430.8 686.5L434.8 684.7L438.8 683.0L442.8 681.5L446.8 680.1L450.8 679.0L454.8 678.5L458.8 678.6L462.8 679.1L466.8 679.7L470.8 680.3L474.8 680.9L478.8 681.5L482.8 681.9L486.8 682.1L490.8 682.1L494.8 682.3L498.8 683.3L502.8 685.5L506.8 688.5L510.8 692.0L514.8 695.2L518.8 698.0L522.8 700.2L526.8 701.8L530.8 702.9L534.8 703.4L538.8 703.6L542.8 703.4L546.8 703.0L550.8 702.4L554.8 701.8L558.8 701.1L562.8 700.3L566.8 699.5L570.8 698.8L574.8 698.4L578.8 698.2L582.8 698.1L586.8 698.0L590.8 698.1L594.8 698.3L598.8 698.6L602.8 699.0L606.8 699.8L610.8 700.9L614.8 702.3L618.8 703.7L622.8 705.1L626.8 706.7L630.8 708.6L634.8 710.7L638.8 713.1L642.8 715.6L646.8 718.1L650.8 720.6L654.8 723.0L658.8 725.2L662.8 727.3L666.8 729.3L670.8 731.1L674.8 732.8L678.8 734.5L682.8 736.1L686.8 737.8L690.8 739.5L694.8 741.2L698.8 742.7L702.8 744.1L706.8 745.2L710.8 746.0L714.8 746.4L718.8 746.1L722.8 744.6L726.8 741.7L730.8 737.4L734.8 732.1L738.8 726.1L742.8 720.0L746.8 714.4L750.8 709.4L754.8 705.0L758.8 701.0L762.8 697.5L766.8 694.4L770.8 691.9L774.8 690.2L778.8 689.4L782.8 689.7L786.8 691.2L790.8 693.4L794.8 695.8L798.8 698.1L802.8 699.7L806.8 700.5L810.8 700.4L814.8 699.9L818.8 699.2L822.8 698.6L826.8 698.0L830.8 697.2L834.8 696.2L838.8 694.8L842.8 693.2L846.8 691.7L850.8 690.2L854.8 688.9L858.8 687.5L862.8 686.1L866.8 684.7L870.8 683.3L874.8 682.0L878.8 680.8L882.8 680.0L886.8 679.5L890.8 679.8L894.8 680.9L898.8 682.9L902.8 685.7L906.8 688.9L910.8 691.9L914.8 694.5L918.8 696.4L922.8 697.6L926.8 698.3L930.8 698.8L934.8 699.2L938.8 699.6L942.8 700.0L946.8 700.3L950.8 700.5L954.8 700.6L958.8 700.7L962.8 700.8L966.8 701.1L970.8 701.7L974.8 702.4L978.8 703.3L982.8 704.2L986.8 705.3L990.8 706.7L994.8 708.9L998.8 712.0L1002.8 716.1L1006.8 720.8L1010.8 725.5L1014.8 729.8L1018.8 733.4L1022.8 736.5L1026.8 739.6L1030.8 742.6L1034.8 745.5L1038.8 748.4L1042.8 751.2L1046.8 753.8L1050.8 756.4L1054.8 759.1L1058.8 761.9L1062.8 764.9L1066.8 768.1L1070.8 771.4L1074.8 774.9L1078.8 778.7L1082.8 783.0L1086.8 787.9L1090.8 793.1L1094.8 798.3L1098.8 803.3L1102.8 807.8L1106.8 811.1L1110.8 813.0L1114.8 813.1L1118.8 811.6L1122.8 809.1L1126.8 806.0L1130.8 802.7L1134.8 799.5L1138.8 796.7L1142.8 794.6L1146.8 793.2L1150.8 792.7L1154.8 793.0L1158.8 793.7L1162.8 794.6L1166.8 795.5L1170.8 796.3L1174.8 797.2L1178.8 798.1L1182.8 799.0L1186.8 799.9L1190.8 800.6L1194.8 801.0L1198.8 801.4L1202.8 802.0L1206.8 803.0L1210.8 804.6L1214.8 806.7L1218.8 808.8L1222.8 810.5L1226.8 811.8L1230.8 812.8L1234.8 813.4L1238.8 813.6L1242.8 813.6L1246.8 813.1L1250.8 812.0L1254.8 810.4L1258.8 808.3L1262.8 805.7L1266.8 802.9L1270.8 800.3L1274.8 798.7L1278.8 798.2L1282.8 798.8L1286.8 800.3L1290.8 802.1L1294.8 804.1L1298.8 806.0L1302.8 807.8L1306.8 809.4L1310.8 810.9L1314.8 812.3L1318.8 813.5L1322.8 814.5L1326.8 815.5L1330.8 816.4L1334.8 817.2L1338.8 817.8L1342.8 818.0L1346.8 817.4L1350.8 816.2L1354.8 814.4L1358.8 812.2L1362.8 809.8L1366.8 807.6L1370.8 805.5L1374.8 803.4L1378.8 801.1L1382.8 798.7L1386.8 796.0L1390.8 792.9L1394.8 789.2L1398.8 784.9L1402.8 779.9L1406.8 774.7L1410.8 770.0L1414.8 766.3L1418.8 763.5L1422.8 761.3L1426.8 759.5L1430.8 758.4L1434.8 757.9L1438.8 757.9L1442.8 758.0L1446.8 758.0L1450.8 757.7L1454.8 757.1L1458.8 756.5L1462.8 755.9L1466.8 755.6L1470.8 755.9L1474.8 756.8L1478.8 758.5L1482.8 760.9L1486.8 764.2L1490.8 768.1L1494.8 771.9L1498.8 775.4L1502.8 778.3L1506.8 780.8L1510.8 783.2L1514.8 785.3L1518.8 787.1L1522.8 788.6L1526.8 789.7L1530.8 790.5L1534.8 791.0L1538.8 791.3L1542.8 791.2L1546.8 790.8L1550.8 790.2L1554.8 789.3L1558.8 788.2L1562.8 787.1L1566.8 786.0L1570.8 784.8L1574.8 783.6L1578.8 782.4L1582.8 781.1L1586.8 779.6L1590.8 777.9L1594.8 776.1L1598.8 774.1L1602.8 772.1L1606.8 770.1L1610.8 768.3L1614.8 766.8L1618.8 765.7L1622.8 765.0L1626.8 764.4L1630.8 764.0L1634.8 763.6L1638.8 763.4L1642.8 763.6L1646.8 764.4L1650.8 765.9L1654.8 768.3L1658.8 771.3L1662.8 774.8L1666.8 778.5L1670.8 782.4L1674.8 786.2L1678.8 789.9L1682.8 793.4L1686.8 796.8L1690.8 799.9L1694.8 802.8L1698.8 805.4L1702.8 807.6L1706.8 809.3L1710.8 810.2L1714.8 810.3L1718.8 809.5L1722.8 808.1L1726.8 806.3L1730.8 804.4L1734.8 802.9L1738.8 801.8L1742.8 800.6L1746.8 799.1L1750.8 797.3L1754.8 795.6L1758.8 794.0L1762.8 792.4L1766.8 791.0L1770.8 789.7L1774.8 788.5L1778.8 787.2L1782.8 786.0L1786.8 784.7L1790.8 783.3L1794.8 781.7L1798.8 780.0L1802.8 778.3L1806.8 776.9L1810.8 776.2L1814.8 776.1L1818.8 776.4L1822.8 776.8L1826.8 777.4L1830.8 778.0L1834.8 778.3L1838.8 778.2L1842.8 777.8L1846.8 777.1L1850.8 776.1L1854.8 774.8L1858.8 773.4L1862.8 771.8L1866.8 770.1L1870.8 768.4L1874.8 766.5L1878.8 764.5L1882.8 762.3L1886.8 760.1L1890.8 757.9L1894.8 755.9L1898.8 753.8L1902.8 751.8L1906.8 749.8L1910.8 747.8L1914.8 745.7L1918.8 743.4L1922.8 741.0L1926.8 738.4L1930.8 735.6L1934.8 732.3L1938.8 728.4L1942.8 723.7L1946.8 718.1L1950.8 711.7L1954.8 704.9L1958.8 697.7L1962.8 690.4L1966.8 683.0L1970.8 675.7L1974.8 668.3L1978.8 660.9L1982.8 653.2L1986.8 645.2L1990.8 636.6L1994.8 627.5L1998.8 618.2L2002.8 609.1L2006.8 600.7L2010.8 592.9L2014.8 585.7L2018.8 579.0L2022.8 572.8L2026.8 567.1L2030.8 561.6L2034.8 556.3L2038.8 551.4L2042.8 547.0L2046.8 543.5L2050.8 540.8L2054.8 538.4L2058.8 536.2L2062.8 533.9L2066.8 531.6L2070.8 529.2L2074.8 527.2L2078.8 525.4L2082.8 523.6L2086.8 521.5L2090.8 519.2L2094.8 517.2L2098.8 515.7L2102.8 514.6L2106.8 514.1L2110.8 514.0L2114.8 514.3L2118.8 514.9L2122.8 515.8L2126.8 517.2L2130.8 518.7L2134.8 520.0L2138.8 520.8L2142.8 521.0L2146.8 520.6L2150.8 519.7L2154.8 518.4L2158.8 516.7L2162.8 514.8L2166.8 512.8L2170.8 510.7L2174.8 508.5L2178.8 506.1L2182.8 503.7L2186.8 501.5L2190.8 499.8L2194.8 498.8L2198.8 498.7L2202.8 499.2L2206.8 500.3L2210.8 501.5" stroke="#aa00ff" stroke-width="2.2" fill="none" stroke-linejoin="round" />
<path d="M137.0 1025.1L141.0 1021.1L145.0 1017.1L149.0 1013.0L153.0 1008.8L157.0 1004.4L161.0 999.7L165.0 994.9L169.0 990.1L173.0 985.3L177.0 980.5L181.0 975.8L185.0 971.1L189.0 966.6L193.0 962.4L197.0 958.3L201.0 954.3L205.0 950.3L209.0 946.3L213.0 942.3L217.0 938.4L221.0 934.5L225.0 930.7L229.0 927.0L233.0 923.4L237.0 919.7L241.0 915.9L245.0 912.0L249.0 908.0L253.0 903.9L257.0 899.8L261.0 895.5L265.0 891.1L269.0 886.8L273.0 882.5L277.0 878.4L281.0 874.3L285.0 870.3L289.0 866.3L293.0 862.3L297.0 858.3L301.0 854.3L305.0 850.2L309.0 846.0L313.0 841.7L317.0 837.3L321.0 832.8L325.0 828.3L329.0 823.6L333.0 818.8L337.0 814.1L341.0 809.6L345.0 805.3L349.0 801.3L353.0 797.3L357.0 793.5L361.0 790.0L365.0 786.7L369.0 783.5L373.0 780.3L377.0 777.1L381.0 773.9L385.0 770.7L389.0 767.6L393.0 764.6L397.0 761.9L401.0 759.5L405.0 757.3L409.0 755.4L413.0 753.6L417.0 751.7L421.0 749.7L425.0 747.4L429.0 745.1L433.0 742.6L437.0 740.0L441.0 737.6L445.0 735.2L449.0 733.0L453.0 730.9L457.0 729.1L461.0 727.7L465.0 726.6L469.0 725.5L473.0 724.5L477.0 723.5L481.0 722.4L485.0 721.3L489.0 720.1L493.0 719.2L497.0 718.5L501.0 718.3L505.0 718.6L509.0 719.4L513.0 720.3L517.0 721.0L521.0 721.4L525.0 721.6L529.0 721.4L533.0 720.9L537.0 720.2L541.0 719.4L545.0 718.7L549.0 718.0L553.0 717.3L557.0 716.7L561.0 716.0L565.0 715.2L569.0 714.5L573.0 713.7L577.0 713.0L581.0 712.4L585.0 711.9L589.0 711.5L593.0 711.3L597.0 711.2L601.0 711.3L605.0 711.6L609.0 712.0L613.0 712.5L617.0 713.2L621.0 714.0L625.0 714.8L629.0 715.8L633.0 716.7L637.0 717.7L641.0 718.7L645.0 719.8L649.0 720.9L653.0 722.0L657.0 723.3L661.0 724.5L665.0 725.6L669.0 726.6L673.0 727.5L677.0 728.2L681.0 728.8L685.0 729.4L689.0 730.3L693.0 731.3L697.0 732.4L701.0 733.4L705.0 734.4L709.0 735.2L713.0 735.8L717.0 736.3L721.0 736.3L725.0 735.6L729.0 734.1L733.0 731.9L737.0 729.3L741.0 726.5L745.0 723.6L749.0 720.8L753.0 718.2L757.0 715.7L761.0 713.5L765.0 711.5L769.0 709.8L773.0 708.3L777.0 707.2L781.0 706.7L785.0 706.8L789.0 707.3L793.0 707.9L797.0 708.4L801.0 708.6L805.0 708.6L809.0 708.3L813.0 707.7L817.0 707.0L821.0 706.4L825.0 705.9L829.0 705.4L833.0 704.8L837.0 704.0L841.0 703.1L845.0 702.1L849.0 701.1L853.0 700.1L857.0 699.0L861.0 698.0L865.0 697.0L869.0 696.0L873.0 695.0L877.0 694.1L881.0 693.3L885.0 692.6L889.0 692.1L893.0 692.1L897.0 692.8L901.0 694.1L905.0 695.6L909.0 697.1L913.0 698.4L917.0 699.2L921.0 699.6L925.0 699.8L929.0 699.9L933.0 700.1L937.0 700.4L941.0 700.7L945.0 700.9L949.0 701.1L953.0 701.1L957.0 701.0L961.0 700.9L965.0 700.9L969.0 701.1L973.0 701.4L977.0 701.8L981.0 702.3L985.0 703.0L989.0 703.9L993.0 705.2L997.0 706.9L1001.0 709.1L1005.0 711.5L1009.0 714.0L1013.0 716.5L1017.0 718.9L1021.0 721.0L1025.0 723.0L1029.0 724.8L1033.0 726.5L1037.0 728.3L1041.0 730.1L1045.0 731.9L1049.0 733.8L1053.0 735.7L1057.0 737.8L1061.0 740.0L1065.0 742.3L1069.0 744.8L1073.0 747.6L1077.0 750.6L1081.0 753.9L1085.0 757.3L1089.0 760.8L1093.0 764.3L1097.0 767.7L1101.0 770.7L1105.0 773.2L1109.0 775.1L1113.0 776.3L1117.0 776.9L1121.0 777.0L1125.0 776.7L1129.0 776.3L1133.0 775.6L1137.0 774.9L1141.0 774.4L1145.0 774.1L1149.0 774.2L1153.0 774.6L1157.0 775.3L1161.0 776.1L1165.0 777.0L1169.0 777.9L1173.0 778.9L1177.0 779.9L1181.0 780.9L1185.0 781.9L1189.0 782.8L1193.0 783.6L1197.0 784.5L1201.0 785.4L1205.0 786.4L1209.0 787.6L1213.0 788.9L1217.0 790.3L1221.0 791.7L1225.0 793.0L1229.0 794.0L1233.0 794.8L1237.0 795.4L1241.0 795.8L1245.0 796.0L1249.0 795.9L1253.0 795.5L1257.0 795.1L1261.0 794.5L1265.0 793.7L1269.0 792.9L1273.0 792.1L1277.0 791.9L1281.0 792.3L1285.0 793.3L1289.0 794.7L1293.0 796.0L1297.0 797.3L1301.0 798.5L1305.0 799.7L1309.0 800.7L1313.0 801.7L1317.0 802.5L1321.0 803.3L1325.0 804.1L1329.0 804.8L1333.0 805.4L1337.0 805.9L1341.0 806.2L1345.0 806.4L1349.0 806.1L1353.0 805.5L1357.0 804.7L1361.0 803.7L1365.0 802.6L1369.0 801.5L1373.0 800.2L1377.0 798.9L1381.0 797.4L1385.0 795.8L1389.0 794.2L1393.0 792.4L1397.0 790.4L1401.0 788.3L1405.0 786.1L1409.0 784.0L1413.0 782.0L1417.0 780.2L1421.0 778.6L1425.0 777.2L1429.0 776.0L1433.0 775.0L1437.0 774.1L1441.0 773.4L1445.0 772.8L1449.0 772.2L1453.0 771.4L1457.0 770.6L1461.0 769.8L1465.0 769.3L1469.0 769.2L1473.0 769.6L1477.0 770.4L1481.0 771.4L1485.0 772.6L1489.0 773.9L1493.0 775.3L1497.0 776.7L1501.0 778.1L1505.0 779.5L1509.0 780.7L1513.0 781.9L1517.0 783.0L1521.0 783.9L1525.0 784.6L1529.0 785.2L1533.0 785.6L1537.0 785.9L1541.0 786.0L1545.0 785.9L1549.0 785.7L1553.0 785.4L1557.0 785.0L1561.0 784.5L1565.0 783.9L1569.0 783.4L1573.0 782.8L1577.0 782.1L1581.0 781.5L1585.0 780.7L1589.0 779.8L1593.0 778.7L1597.0 777.6L1601.0 776.5L1605.0 775.6L1609.0 774.8L1613.0 774.2L1617.0 773.6L1621.0 773.1L1625.0 772.7L1629.0 772.2L1633.0 771.9L1637.0 771.6L1641.0 771.6L1645.0 771.7L1649.0 772.2L1653.0 773.0L1657.0 774.3L1661.0 775.9L1665.0 777.8L1669.0 779.9L1673.0 782.1L1677.0 784.3L1681.0 786.4L1685.0 788.5L1689.0 790.4L1693.0 792.1L1697.0 793.6L1701.0 794.7L1705.0 795.7L1709.0 796.3L1713.0 796.5L1717.0 796.6L1721.0 796.4L1725.0 796.1L1729.0 795.6L1733.0 795.1L1737.0 794.4L1741.0 793.6L1745.0 792.6L1749.0 791.5L1753.0 790.4L1757.0 789.4L1761.0 788.8L1765.0 788.3L1769.0 787.9L1773.0 787.6L1777.0 787.4L1781.0 787.4L1785.0 787.3L1789.0 787.1L1793.0 786.7L1797.0 786.1L1801.0 785.4L1805.0 784.6L1809.0 784.0L1813.0 783.5L1817.0 783.1L1821.0 782.7L1825.0 782.3L1829.0 782.0L1833.0 781.8L1837.0 781.5L1841.0 781.0L1845.0 780.4L1849.0 779.5L1853.0 778.6L1857.0 777.7L1861.0 776.8L1865.0 776.0L1869.0 775.1L1873.0 774.3L1877.0 773.3L1881.0 772.2L1885.0 771.0L1889.0 769.8L1893.0 768.5L1897.0 767.0L1901.0 765.4L1905.0 763.8L1909.0 762.2L1913.0 760.6L1917.0 759.0L1921.0 757.3L1925.0 755.5L1929.0 753.3L1933.0 750.7L1937.0 748.0L1941.0 745.0L1945.0 741.9L1949.0 738.5L1953.0 735.0L1957.0 731.2L1961.0 727.2L1965.0 722.8L1969.0 718.1L1973.0 713.3L1977.0 708.2L1981.0 703.0L1985.0 697.5L1989.0 691.9L1993.0 686.2L1997.0 680.4L2001.0 674.5L2005.0 668.5L2009.0 662.6L2013.0 656.8L2017.0 651.1L2021.0 645.4L2025.0 640.0L2029.0 634.8L2033.0 630.0L2037.0 625.5L2041.0 621.2L2045.0 617.1L2049.0 613.5L2053.0 610.1L2057.0 606.9L2061.0 603.7L2065.0 600.8L2069.0 597.9L2073.0 595.0L2077.0 592.2L2081.0 589.4L2085.0 586.6L2089.0 583.9L2093.0 581.2L2097.0 578.8L2101.0 576.8L2105.0 575.1L2109.0 573.5L2113.0 572.0L2117.0 570.5L2121.0 569.2L2125.0 567.8L2129.0 566.6L2133.0 565.5L2137.0 564.6L2141.0 563.7L2145.0 562.7L2149.0 561.5L2153.0 559.9L2157.0 558.1L2161.0 556.2L2165.0 554.2L2169.0 552.0L2173.0 549.6L2177.0 547.3L2181.0 544.9L2185.0 542.7L2189.0 540.5L2193.0 538.6L2197.0 537.2L2201.0 536.1L2205.0 535.4L2209.0 534.9L2213.0 534.3" stroke="#2196f3" stroke-width="5.1" fill="none" stroke-linejoin="round" />
<path d="M181.2 1025.1L185.2 1022.6L189.2 1020.0L193.2 1017.4L197.2 1014.8L201.2 1012.3L205.2 1009.8L209.2 1007.3L213.2 1004.9L217.2 1002.5L221.2 999.9L225.2 997.3L229.2 994.6L233.2 991.8L237.2 989.0L241.2 986.2L245.2 983.4L249.2 980.5L253.2 977.6L257.2 974.4L261.2 971.1L265.2 967.5L269.2 964.0L273.2 960.5L277.2 957.2L281.2 954.0L285.2 950.8L289.2 947.6L293.2 944.4L297.2 941.2L301.2 937.9L305.2 934.6L309.2 931.2L313.2 927.7L317.2 924.1L321.2 920.4L325.2 916.7L329.2 912.8L333.2 908.8L337.2 904.9L341.2 901.0L345.2 897.3L349.2 893.6L353.2 890.1L357.2 886.6L361.2 883.2L365.2 880.0L369.2 876.8L373.2 873.7L377.2 870.7L381.2 867.8L385.2 865.0L389.2 862.3L393.2 859.7L397.2 857.2L401.2 854.7L405.2 852.3L409.2 849.9L413.2 847.5L417.2 845.1L421.2 842.7L425.2 840.3L429.2 837.9L433.2 835.5L437.2 833.2L441.2 830.9L445.2 828.7L449.2 826.6L453.2 824.6L457.2 822.6L461.2 820.6L465.2 818.6L469.2 816.6L473.2 814.6L477.2 812.6L481.2 810.6L485.2 808.6L489.2 806.6L493.2 804.8L497.2 803.3L501.2 801.9L505.2 800.8L509.2 799.9L513.2 799.0L517.2 798.2L521.2 797.2L525.2 796.2L529.2 795.0L533.2 793.8L537.2 792.5L541.2 791.2L545.2 789.9L549.2 788.5L553.2 787.2L557.2 785.8L561.2 784.3L565.2 782.9L569.2 781.5L573.2 780.2L577.2 778.9L581.2 777.7L585.2 776.5L589.2 775.4L593.2 774.3L597.2 773.2L601.2 772.2L605.2 771.3L609.2 770.6L613.2 770.0L617.2 769.4L621.2 768.8L625.2 768.3L629.2 767.8L633.2 767.4L637.2 767.0L641.2 766.8L645.2 766.6L649.2 766.5L653.2 766.3L657.2 766.2L661.2 766.2L665.2 766.1L669.2 766.0L673.2 766.0L677.2 765.9L681.2 766.0L685.2 766.0L689.2 766.1L693.2 766.2L697.2 766.2L701.2 766.2L705.2 766.2L709.2 766.1L713.2 765.9L717.2 765.6L721.2 765.1L725.2 764.5L729.2 763.4L733.2 762.0L737.2 760.3L741.2 758.4L745.2 756.6L749.2 754.8L753.2 753.1L757.2 751.3L761.2 749.7L765.2 748.1L769.2 746.6L773.2 745.3L777.2 744.1L781.2 743.2L785.2 742.5L789.2 742.1L793.2 741.6L797.2 741.2L801.2 740.7L805.2 740.1L809.2 739.6L813.2 739.0L817.2 738.5L821.2 738.0L825.2 737.5L829.2 736.9L833.2 736.3L837.2 735.5L841.2 734.7L845.2 733.9L849.2 733.0L853.2 732.1L857.2 731.1L861.2 730.2L865.2 729.2L869.2 728.2L873.2 727.3L877.2 726.3L881.2 725.4L885.2 724.6L889.2 723.9L893.2 723.4L897.2 723.3L901.2 723.4L905.2 723.8L909.2 724.0L913.2 724.1L917.2 724.1L921.2 723.9L925.2 723.7L929.2 723.5L933.2 723.2L937.2 723.0L941.2 722.6L945.2 722.3L949.2 722.0L953.2 721.6L957.2 721.2L961.2 720.8L965.2 720.6L969.2 720.4L973.2 720.3L977.2 720.4L981.2 720.4L985.2 720.5L989.2 720.8L993.2 721.2L997.2 722.0L1001.2 722.9L1005.2 724.0L1009.2 725.0L1013.2 726.0L1017.2 727.0L1021.2 727.9L1025.2 728.7L1029.2 729.4L1033.2 730.2L1037.2 731.0L1041.2 731.8L1045.2 732.7L1049.2 733.7L1053.2 734.7L1057.2 735.7L1061.2 736.9L1065.2 738.0L1069.2 739.3L1073.2 740.7L1077.2 742.1L1081.2 743.6L1085.2 745.3L1089.2 747.1L1093.2 749.0L1097.2 750.9L1101.2 752.7L1105.2 754.4L1109.2 755.9L1113.2 757.1L1117.2 757.9L1121.2 758.4L1125.2 758.7L1129.2 758.8L1133.2 758.8L1137.2 758.7L1141.2 758.6L1145.2 758.8L1149.2 759.1L1153.2 759.5L1157.2 760.0L1161.2 760.6L1165.2 761.3L1169.2 762.0L1173.2 762.8L1177.2 763.5L1181.2 764.1L1185.2 764.7L1189.2 765.3L1193.2 765.9L1197.2 766.6L1201.2 767.4L1205.2 768.5L1209.2 769.6L1213.2 770.8L1217.2 771.8L1221.2 772.8L1225.2 773.6L1229.2 774.4L1233.2 775.0L1237.2 775.4L1241.2 775.7L1245.2 775.9L1249.2 776.1L1253.2 776.2L1257.2 776.2L1261.2 776.1L1265.2 775.9L1269.2 775.8L1273.2 775.7L1277.2 775.8L1281.2 776.2L1285.2 776.8L1289.2 777.6L1293.2 778.4L1297.2 779.2L1301.2 780.0L1305.2 780.8L1309.2 781.6L1313.2 782.3L1317.2 783.1L1321.2 783.8L1325.2 784.5L1329.2 785.1L1333.2 785.7L1337.2 786.1L1341.2 786.3L1345.2 786.4L1349.2 786.5L1353.2 786.4L1357.2 786.3L1361.2 786.1L1365.2 785.8L1369.2 785.5L1373.2 785.1L1377.2 784.7L1381.2 784.3L1385.2 783.8L1389.2 783.2L1393.2 782.5L1397.2 781.7L1401.2 780.8L1405.2 780.0L1409.2 779.1L1413.2 778.2L1417.2 777.4L1421.2 776.5L1425.2 775.7L1429.2 775.0L1433.2 774.4L1437.2 774.0L1441.2 773.7L1445.2 773.4L1449.2 773.2L1453.2 772.9L1457.2 772.7L1461.2 772.5L1465.2 772.3L1469.2 772.3L1473.2 772.3L1477.2 772.6L1481.2 772.9L1485.2 773.4L1489.2 773.9L1493.2 774.6L1497.2 775.4L1501.2 776.1L1505.2 776.9L1509.2 777.6L1513.2 778.3L1517.2 779.0L1521.2 779.6L1525.2 780.2L1529.2 780.7L1533.2 781.0L1537.2 781.4L1541.2 781.7L1545.2 781.9L1549.2 781.9L1553.2 781.8L1557.2 781.6L1561.2 781.4L1565.2 781.2L1569.2 780.8L1573.2 780.4L1577.2 780.0L1581.2 779.5L1585.2 779.0L1589.2 778.5L1593.2 778.0L1597.2 777.5L1601.2 776.9L1605.2 776.5L1609.2 776.0L1613.2 775.6L1617.2 775.3L1621.2 774.9L1625.2 774.6L1629.2 774.4L1633.2 774.2L1637.2 774.1L1641.2 774.0L1645.2 774.0L1649.2 774.2L1653.2 774.7L1657.2 775.4L1661.2 776.2L1665.2 777.1L1669.2 778.1L1673.2 779.1L1677.2 780.1L1681.2 781.1L1685.2 782.1L1689.2 783.1L1693.2 784.0L1697.2 784.9L1701.2 785.6L1705.2 786.1L1709.2 786.5L1713.2 786.8L1717.2 787.0L1721.2 787.0L1725.2 786.9L1729.2 786.8L1733.2 786.8L1737.2 786.9L1741.2 787.0L1745.2 786.9L1749.2 786.6L1753.2 786.3L1757.2 786.0L1761.2 785.7L1765.2 785.4L1769.2 785.2L1773.2 785.0L1777.2 784.8L1781.2 784.6L1785.2 784.3L1789.2 784.1L1793.2 783.8L1797.2 783.6L1801.2 783.3L1805.2 783.1L1809.2 782.9L1813.2 782.7L1817.2 782.5L1821.2 782.4L1825.2 782.3L1829.2 782.3L1833.2 782.3L1837.2 782.2L1841.2 782.1L1845.2 781.9L1849.2 781.6L1853.2 781.3L1857.2 781.0L1861.2 780.6L1865.2 780.1L1869.2 779.6L1873.2 779.1L1877.2 778.6L1881.2 778.0L1885.2 777.3L1889.2 776.5L1893.2 775.8L1897.2 774.9L1901.2 774.1L1905.2 773.2L1909.2 772.2L1913.2 771.2L1917.2 770.2L1921.2 769.2L1925.2 768.0L1929.2 766.8L1933.2 765.4L1937.2 764.1L1941.2 762.6L1945.2 761.0L1949.2 759.2L1953.2 757.2L1957.2 755.2L1961.2 753.1L1965.2 750.8L1969.2 748.3L1973.2 745.7L1977.2 743.1L1981.2 740.2L1985.2 737.2L1989.2 733.8L1993.2 730.3L1997.2 726.6L2001.2 722.9L2005.2 719.1L2009.2 715.2L2013.2 711.3L2017.2 707.3L2021.2 703.4L2025.2 699.6L2029.2 696.0L2033.2 692.6L2037.2 689.2L2041.2 685.9L2045.2 682.7L2049.2 679.6L2053.2 676.5L2057.2 673.5L2061.2 670.5L2065.2 667.6L2069.2 664.8L2073.2 662.1L2077.2 659.4L2081.2 656.8L2085.2 654.2L2089.2 651.7L2093.2 649.3L2097.2 647.0L2101.2 644.7L2105.2 642.6L2109.2 640.8L2113.2 639.3L2117.2 637.9L2121.2 636.5L2125.2 635.2L2129.2 633.9L2133.2 632.5L2137.2 631.2L2141.2 629.8L2145.2 628.4L2149.2 627.0L2153.2 625.4L2157.2 623.7L2161.2 622.1L2165.2 620.3L2169.2 618.5L2173.2 616.6L2177.2 614.6L2181.2 612.7L2185.2 610.7L2189.2 608.7L2193.2 606.7L2197.2 604.7L2201.2 603.0L2205.2 601.5L2209.2 600.2L2213.2 599.0" stroke="#f44336" stroke-width="5.4" fill="none" stroke-linejoin="round" />
</g>
<path d="M128 536H2724" stroke="#ef5350" stroke-width="2" stroke-dasharray="2 4" fill="none"/>
<rect x="2266" y="406" width="370.500" height="24" fill="#2b1a3d" stroke="#4caf50" stroke-width="4"/>
<path d="M2268 417H2634.500" stroke="#c9b458" stroke-width="2"/>
<rect x="2271" y="581" width="365.500" height="19.500" fill="#2b1a3d" stroke="#f44336" stroke-width="4"/>
<path d="M2273 596H2634.500" stroke="#c9b458" stroke-width="2"/>
<path d="M2447 488V439M2426.500 457.500L2447 438.500L2466.500 457.500" fill="none" stroke="#4caf50" stroke-width="3"/>
<path d="M2449 524V563M2429 545.500L2449 564.500L2469.500 545" fill="none" stroke="#f44336" stroke-width="3"/>
<rect x="141" y="205" width="985" height="34" rx="3" fill="#171b26" fill-opacity="0.8"/>
<rect x="141" y="346.5" width="313" height="31" rx="3" fill="#171b26" fill-opacity="0.8"/>
<rect x="141" y="394.2" width="313" height="31" rx="3" fill="#171b26" fill-opacity="0.8"/>
<rect x="141" y="442.1" width="313" height="31" rx="3" fill="#171b26" fill-opacity="0.8"/>
<rect x="141" y="489.8" width="313" height="31" rx="3" fill="#171b26" fill-opacity="0.8"/>
<rect x="141" y="537.9" width="299" height="31" rx="3" fill="#171b26" fill-opacity="0.8"/>
<text x="145.0" y="230.0" font-size="30" fill="#b2b5be" stroke="#b2b5be" stroke-width="0.45" textLength="81.0" lengthAdjust="spacingAndGlyphs">Jp225</text>
<text x="235.0" y="230.0" font-size="30" fill="#5d606b" stroke="#5d606b" stroke-width="0.45">·</text>
<text x="253.0" y="230.0" font-size="30" fill="#b2b5be" stroke="#b2b5be" stroke-width="0.45" textLength="33.5" lengthAdjust="spacingAndGlyphs">1D</text>
<circle cx="335.700" cy="220.200" r="18" fill="#1b3a3d"/><circle cx="335.700" cy="220.200" r="8.700" fill="#0d9d8d"/>
<text x="386.0" y="232.5" font-size="26" fill="#b2b5be" stroke="#b2b5be" stroke-width="0.45" textLength="15.5" lengthAdjust="spacingAndGlyphs">O</text>
<text x="406.2" y="232.5" font-size="26" fill="#ef5350" stroke="#ef5350" stroke-width="0.45" textLength="102.7" lengthAdjust="spacingAndGlyphs">31975.83</text>
<text x="523.5" y="232.5" font-size="26" fill="#b2b5be" stroke="#b2b5be" stroke-width="0.45" textLength="15.0" lengthAdjust="spacingAndGlyphs">H</text>
<text x="542.7" y="232.5" font-size="26" fill="#ef5350" stroke="#ef5350" stroke-width="0.45" textLength="103.4" lengthAdjust="spacingAndGlyphs">32008.60</text>
<text x="660.0" y="232.5" font-size="26" fill="#b2b5be" stroke="#b2b5be" stroke-width="0.45" textLength="11.5" lengthAdjust="spacingAndGlyphs">L</text>
<text x="674.0" y="232.5" font-size="26" fill="#ef5350" stroke="#ef5350" stroke-width="0.45" textLength="103.0" lengthAdjust="spacingAndGlyphs">31687.39</text>
<text x="791.0" y="232.5" font-size="26" fill="#b2b5be" stroke="#b2b5be" stroke-width="0.45" textLength="14.0" lengthAdjust="spacingAndGlyphs">C</text>
<text x="809.2" y="232.5" font-size="26" fill="#ef5350" stroke="#ef5350" stroke-width="0.45" textLength="102.4" lengthAdjust="spacingAndGlyphs">31813.82</text>
<text x="925.6" y="232.5" font-size="26" fill="#ef5350" stroke="#ef5350" stroke-width="0.45" textLength="196.0" lengthAdjust="spacingAndGlyphs">−169.65 (−0.53%)</text>
<rect x="143.500" y="253.500" width="134.500" height="73" rx="6" fill="#121622" stroke="#ef5350" stroke-width="2"/>
<text x="159.5" y="298.5" font-size="24" fill="#ef5350" stroke="#ef5350" stroke-width="0.45" textLength="102.0" lengthAdjust="spacingAndGlyphs">31813.82</text>
<rect x="378.500" y="253.500" width="134.500" height="73" rx="6" fill="#121622" stroke="#26a69a" stroke-width="2"/>
<text x="394.6" y="298.5" font-size="24" fill="#26a69a" stroke="#26a69a" stroke-width="0.45" textLength="102.5" lengthAdjust="spacingAndGlyphs">31824.85</text>
<text x="302.0" y="272.7" font-size="21" fill="#d1d4dc" stroke="#d1d4dc" stroke-width="0.45" textLength="52.0" lengthAdjust="spacingAndGlyphs">11.03</text>
<rect x="287.500" y="283.500" width="81" height="43" rx="6" fill="#1e222d"/>
<text x="303.3" y="313.5" font-size="26" fill="#d1d4dc" stroke="#d1d4dc" stroke-width="0.45" textLength="48.7" lengthAdjust="spacingAndGlyphs">0.05</text>
<text x="145.0" y="369.0" font-size="26" fill="#b2b5be" stroke="#b2b5be" stroke-width="0.45" textLength="45.5" lengthAdjust="spacingAndGlyphs">EMA</text>
<text x="200.0" y="369.0" font-size="26" fill="#787b86" stroke="#787b86" stroke-width="0.45" textLength="128.4" lengthAdjust="spacingAndGlyphs">200 close 0</text>
<text x="345.6" y="369.0" font-size="26" fill="#f44336" stroke="#f44336" stroke-width="0.45" textLength="103.9" lengthAdjust="spacingAndGlyphs">30686.80</text>
<text x="145.0" y="416.7" font-size="26" fill="#b2b5be" stroke="#b2b5be" stroke-width="0.45" textLength="45.5" lengthAdjust="spacingAndGlyphs">EMA</text>
<text x="200.0" y="416.7" font-size="26" fill="#787b86" stroke="#787b86" stroke-width="0.45" textLength="128.4" lengthAdjust="spacingAndGlyphs">200 close 0</text>
<text x="345.6" y="416.7" font-size="26" fill="#f44336" stroke="#f44336" stroke-width="0.45" textLength="103.9" lengthAdjust="spacingAndGlyphs">30686.80</text>
<text x="145.0" y="464.6" font-size="26" fill="#b2b5be" stroke="#b2b5be" stroke-width="0.45" textLength="45.5" lengthAdjust="spacingAndGlyphs">EMA</text>
<text x="200.0" y="464.6" font-size="26" fill="#787b86" stroke="#787b86" stroke-width="0.45" textLength="128.4" lengthAdjust="spacingAndGlyphs">100 close 0</text>
<text x="345.6" y="464.6" font-size="26" fill="#2196f3" stroke="#2196f3" stroke-width="0.45" textLength="103.9" lengthAdjust="spacingAndGlyphs">31860.60</text>
<text x="145.0" y="512.3" font-size="26" fill="#b2b5be" stroke="#b2b5be" stroke-width="0.45" textLength="45.5" lengthAdjust="spacingAndGlyphs">EMA</text>
<text x="200.0" y="512.3" font-size="26" fill="#787b86" stroke="#787b86" stroke-width="0.45" textLength="128.4" lengthAdjust="spacingAndGlyphs">200 close 0</text>
<text x="345.6" y="512.3" font-size="26" fill="#f44336" stroke="#f44336" stroke-width="0.45" textLength="103.9" lengthAdjust="spacingAndGlyphs">30686.80</text>
<text x="145.0" y="560.4" font-size="26" fill="#b2b5be" stroke="#b2b5be" stroke-width="0.45" textLength="45.5" lengthAdjust="spacingAndGlyphs">EMA</text>
<text x="200.0" y="560.4" font-size="26" fill="#787b86" stroke="#787b86" stroke-width="0.45" textLength="114.4" lengthAdjust="spacingAndGlyphs">50 close 0</text>
<text x="332.0" y="560.4" font-size="26" fill="#aa00ff" stroke="#aa00ff" stroke-width="0.45" textLength="103.6" lengthAdjust="spacingAndGlyphs">32436.73</text>
<rect x="145" y="581" width="56" height="40" rx="4" fill="#121622" stroke="#363a45" stroke-width="2"/>
<path d="M165 605l8-7.500 8 7.500" fill="none" stroke="#d1d4dc" stroke-width="2.800"/>
<g clip-path="url(#cpr)">
<path d="M126.0 1241.0L126.1 1242.4L127.8 1222.8L129.8 1231.2L134.0 1141.8L138.2 1105.5L142.9 1095.7L144.6 1046.8L147.9 1052.4L150.2 1048.2L153.0 1081.7L155.8 1057.9L159.1 1051.0L162.5 1088.7L167.0 1125.0L170.9 1111.1L174.5 1081.7L177.3 1099.9L179.3 1084.5L182.0 1083.1L184.3 1095.7L187.1 1106.9L189.3 1091.5L192.1 1092.9L194.9 1105.5L197.7 1106.9L201.1 1153.0L204.4 1134.8L208.9 1133.4L210.8 1141.8L216.4 1129.2L221.2 1127.8L224.8 1120.8L227.6 1171.1L231.2 1170.6L233.2 1157.2L235.1 1162.8L238.8 1133.4L241.6 1098.5L244.4 1104.1L247.2 1105.5L249.1 1155.8L252.8 1153.0L255.6 1126.4L259.7 1085.9L262.0 1084.5L263.4 1112.4L266.7 1104.1L270.9 1083.1L273.2 1108.3L275.1 1137.6L279.3 1115.2L283.5 1120.8L286.9 1129.2L290.5 1119.4L293.8 1141.8L296.6 1175.3L298.9 1166.9L301.1 1214.5L305.0 1175.3L309.5 1161.4L313.4 1155.8L317.0 1119.4L319.8 1122.2L322.6 1133.4L328.2 1119.4L331.0 1094.3L334.6 1085.9L337.4 1095.7L339.4 1116.6L343.0 1115.2L345.8 1133.4L350.6 1130.6L353.4 1172.5L357.0 1203.3L359.0 1160.0L360.9 1192.1L364.6 1200.5L367.3 1224.2L368.7 1208.9L372.9 1235.4L375.7 1211.7L378.5 1215.9L382.7 1180.9L386.9 1176.7L389.7 1171.1L395.3 1158.6L398.1 1166.9L400.9 1204.7L403.7 1208.9L407.3 1231.2L411.2 1267.6L414.0 1222.8L417.7 1185.1L420.4 1192.1L424.6 1189.3L427.4 1164.2L430.8 1137.6L433.6 1182.3L437.2 1178.1L440.8 1165.6L442.8 1190.7L446.4 1178.1L448.4 1190.7L451.2 1182.3L454.8 1179.5L458.2 1225.6L461.0 1256.4L464.3 1234.0L468.0 1217.3L470.8 1210.3L473.5 1225.6L477.7 1228.4L480.5 1222.8L482.8 1234.0L484.7 1213.1L486.7 1239.6L490.3 1206.1L492.3 1190.7L494.5 1186.5L498.7 1197.7L501.5 1236.8L505.1 1282.9L507.1 1282.9L509.9 1239.6L512.7 1262.0L514.6 1245.2L517.4 1248.0L523.9 1214.5L526.7 1210.3L528.6 1214.5L533.6 1186.5L536.4 1175.3L540.6 1189.3L543.4 1197.7L547.6 1178.1L551.8 1166.9L554.6 1178.1L558.8 1197.7L561.6 1185.1L564.9 1182.3L567.2 1160.0L569.4 1154.4L572.8 1164.2L575.0 1178.1L577.0 1241.0L581.2 1208.9L583.9 1206.1L586.2 1208.9L589.0 1182.3L592.3 1192.1L599.3 1211.7L604.9 1217.3L608.5 1227.0L611.3 1253.6L613.3 1255.0L615.2 1273.2L616.9 1301.1L618.9 1250.8L620.3 1208.9L621.7 1199.1L623.9 1213.1L626.4 1211.7L628.7 1248.0L632.9 1273.2L634.8 1288.5L639.8 1234.0L644.0 1214.5L646.8 1208.9L651.0 1252.2L654.4 1231.2L656.6 1234.0L660.8 1248.0L663.6 1239.6L666.4 1239.6L669.2 1245.2L671.1 1214.5L674.8 1210.3L677.6 1208.9L680.4 1178.1L684.0 1194.9L686.0 1214.5L690.2 1229.8L692.9 1250.8L697.1 1257.8L701.3 1263.4L702.7 1220.1L706.4 1203.3L709.7 1208.9L712.0 1213.1L713.9 1192.1L716.7 1210.3L719.5 1182.3L722.3 1151.6L725.1 1141.8L727.9 1094.3L730.7 1071.9L733.5 1088.7L736.3 1090.1L739.1 1083.1L741.9 1081.7L744.7 1063.5L747.4 1095.7L751.1 1083.1L753.0 1097.1L755.8 1140.4L758.6 1172.5L761.4 1160.0L764.2 1155.8L766.2 1137.6L769.0 1143.2L772.6 1143.2L775.4 1189.3L776.8 1173.9L779.6 1200.5L782.4 1225.6L786.6 1280.1L788.5 1259.2L790.8 1277.3L794.1 1253.6L796.9 1252.2L799.2 1225.6L802.5 1242.4L806.1 1210.3L808.9 1190.7L813.1 1180.9L816.5 1175.3L818.7 1180.9L821.4 1220.1L825.6 1208.9L828.9 1194.9L832.6 1211.7L835.4 1197.7L839.0 1189.3L841.8 1166.9L844.6 1161.4L846.8 1164.2L848.5 1150.2L850.7 1147.4L854.1 1160.0L856.9 1161.4L858.6 1194.9L863.3 1211.7L866.1 1182.3L868.9 1164.2L870.9 1166.9L873.1 1158.6L877.3 1182.3L882.0 1175.3L885.7 1171.1L887.6 1173.9L890.4 1192.1L892.7 1197.7L894.9 1291.3L898.8 1257.8L903.0 1296.9L906.1 1253.6L908.9 1264.8L913.6 1208.9L915.6 1194.9L917.8 1193.5L922.0 1208.9L924.8 1211.7L929.0 1227.0L931.0 1192.1L933.2 1196.3L937.4 1215.9L939.6 1229.8L943.0 1203.3L945.2 1200.5L948.6 1187.9L951.4 1182.3L953.6 1182.3L955.6 1193.5L959.7 1192.1L963.1 1187.9L967.3 1158.6L969.5 1186.5L972.3 1204.7L977.1 1246.6L980.7 1225.6L982.7 1207.5L984.9 1232.6L988.3 1227.0L990.5 1221.4L993.3 1236.8L996.1 1256.4L998.3 1275.9L1001.1 1285.7L1003.1 1289.9L1005.0 1269.0L1007.3 1288.5L1010.6 1291.3L1013.4 1305.3L1016.2 1275.9L1019.0 1238.2L1021.2 1241.0L1024.6 1229.8L1026.8 1243.8L1029.1 1236.8L1033.8 1236.8L1035.2 1220.1L1037.2 1183.7L1040.8 1214.5L1043.0 1242.4L1046.9 1239.6L1049.2 1210.3L1051.1 1207.5L1053.4 1225.6L1055.3 1241.0L1057.6 1245.2L1059.0 1259.2L1062.6 1252.2L1064.6 1270.4L1067.3 1277.3L1071.0 1214.5L1072.9 1229.8L1075.7 1245.2L1079.1 1229.8L1081.3 1245.2L1084.1 1264.8L1086.9 1291.3L1089.1 1309.5L1092.5 1267.6L1093.9 1262.0L1096.1 1264.8L1098.9 1270.4L1102.3 1257.8L1106.5 1235.4L1109.3 1194.9L1112.1 1161.4L1114.0 1146.0L1116.8 1148.8L1119.0 1147.4L1122.4 1130.6L1124.6 1137.6L1126.9 1119.4L1129.1 1111.1L1132.5 1119.4L1134.4 1116.6L1136.7 1108.3L1138.6 1153.0L1140.8 1173.9L1143.6 1168.3L1147.0 1154.4L1150.4 1175.3L1153.1 1208.9L1155.4 1211.7L1158.7 1213.1L1161.0 1231.2L1163.2 1250.8L1166.6 1210.3L1169.9 1208.9L1172.7 1197.7L1175.5 1190.7L1178.3 1192.1L1181.1 1197.7L1183.3 1227.0L1184.7 1214.5L1188.9 1262.0L1192.6 1186.5L1196.7 1210.3L1200.1 1200.5L1202.9 1194.9L1205.1 1175.3L1207.9 1211.7L1209.9 1207.5L1212.7 1245.2L1215.5 1245.2L1218.3 1250.8L1221.1 1257.8L1223.9 1204.7L1226.7 1201.9L1228.9 1192.1L1230.8 1211.7L1233.1 1220.1L1235.0 1213.1L1237.0 1194.9L1240.6 1176.7L1242.6 1200.5L1246.2 1193.5L1249.0 1189.3L1251.8 1176.7L1254.6 1168.3L1256.6 1173.9L1259.4 1161.4L1263.0 1147.4L1264.9 1160.0L1267.2 1139.0L1270.0 1133.4L1272.2 1132.9L1275.0 1137.6L1277.0 1143.2L1278.4 1178.1L1280.6 1242.4L1283.9 1242.4L1286.2 1235.4L1289.0 1271.8L1292.3 1253.6L1295.1 1250.8L1297.4 1218.7L1300.2 1227.0L1303.0 1235.4L1306.9 1194.9L1310.5 1199.1L1312.5 1199.1L1314.7 1203.3L1317.5 1222.8L1321.7 1228.4L1325.3 1231.8L1329.2 1229.0L1331.5 1200.5L1333.7 1186.5L1336.5 1199.1L1339.3 1217.3L1342.6 1208.9L1345.4 1189.3L1346.8 1172.5L1349.6 1171.1L1352.4 1150.2L1356.1 1127.8L1358.8 1119.4L1361.6 1134.8L1363.6 1134.8L1366.4 1160.0L1369.2 1127.8L1372.0 1134.8L1374.8 1133.4L1377.6 1144.6L1380.4 1158.6L1382.3 1137.6L1384.6 1154.4L1387.9 1137.6L1390.7 1133.4L1392.9 1166.9L1396.3 1150.2L1399.1 1147.4L1400.8 1111.1L1404.1 1105.5L1408.3 1099.9L1413.1 1094.3L1415.3 1139.0L1418.1 1155.8L1420.3 1165.6L1423.1 1166.9L1427.0 1150.2L1429.3 1199.1L1432.6 1208.9L1435.4 1222.8L1439.1 1231.2L1441.0 1234.0L1442.7 1253.6L1445.5 1235.4L1448.3 1246.6L1453.0 1189.3L1455.0 1175.3L1459.2 1151.6L1462.3 1208.9L1464.8 1206.1L1467.0 1229.8L1469.8 1231.2L1473.2 1221.4L1475.4 1241.0L1479.6 1262.0L1481.0 1264.8L1485.2 1285.7L1488.5 1296.9L1493.0 1269.0L1496.9 1308.1L1499.7 1253.6L1503.3 1204.7L1506.1 1211.7L1509.5 1213.1L1510.9 1229.8L1515.1 1234.0L1518.2 1250.8L1520.0 1250.8L1522.2 1215.9L1525.0 1229.8L1527.0 1192.1L1530.6 1189.3L1534.0 1193.5L1536.8 1199.1L1539.6 1190.7L1541.8 1189.3L1545.2 1162.8L1547.1 1169.7L1549.3 1203.3L1553.0 1168.3L1554.9 1172.5L1557.7 1166.9L1561.1 1165.6L1563.3 1192.1L1567.0 1197.1L1570.3 1169.7L1574.5 1150.2L1575.9 1149.6L1577.3 1179.5L1580.1 1146.0L1582.9 1143.2L1585.7 1151.6L1588.5 1154.4L1592.1 1159.1L1594.9 1157.2L1598.3 1157.2L1601.1 1126.4L1604.4 1125.0L1607.2 1122.2L1609.4 1127.8L1615.0 1182.3L1619.2 1139.6L1622.9 1221.4L1626.2 1220.1L1627.6 1215.9L1631.2 1224.8L1634.6 1214.5L1637.4 1207.5L1640.7 1182.3L1642.4 1178.1L1645.2 1180.9L1648.6 1214.5L1650.8 1252.2L1653.6 1260.6L1656.9 1309.5L1658.9 1292.7L1663.1 1310.9L1665.3 1294.1L1667.6 1292.7L1670.9 1302.5L1672.9 1282.9L1675.1 1308.1L1679.3 1301.1L1681.3 1296.9L1683.5 1302.5L1687.1 1253.6L1689.9 1245.2L1693.3 1239.6L1695.5 1214.5L1698.9 1248.0L1701.7 1264.8L1705.0 1217.3L1708.7 1203.3L1711.4 1210.3L1714.2 1178.1L1717.0 1153.0L1719.0 1150.2L1721.8 1141.8L1725.4 1133.4L1728.2 1136.2L1731.0 1139.6L1734.6 1136.2L1738.0 1136.8L1740.8 1126.4L1745.0 1121.7L1746.9 1127.8L1749.2 1160.0L1752.5 1153.0L1757.6 1133.4L1760.9 1131.2L1763.2 1147.4L1766.5 1172.5L1770.1 1175.3L1772.9 1192.1L1777.1 1236.8L1779.4 1210.3L1784.1 1171.1L1786.9 1193.5L1790.5 1178.1L1793.9 1147.4L1796.7 1112.4L1799.5 1111.1L1801.7 1118.9L1805.1 1088.7L1807.3 1141.8L1809.3 1192.1L1812.9 1187.9L1814.9 1211.7L1818.5 1220.1L1821.3 1264.8L1823.2 1220.1L1826.9 1238.2L1828.8 1222.8L1831.6 1222.8L1835.3 1206.1L1837.2 1214.5L1843.6 1203.3L1845.6 1187.9L1849.2 1194.9L1851.2 1153.0L1854.0 1164.2L1856.8 1146.8L1858.7 1146.0L1861.0 1153.0L1864.3 1185.1L1866.6 1200.5L1868.0 1203.3L1871.6 1199.1L1874.9 1168.3L1877.7 1180.9L1881.9 1140.4L1884.7 1136.2L1888.4 1130.6L1890.3 1143.2L1894.5 1137.6L1897.3 1134.0L1900.7 1132.9L1905.1 1180.9L1909.0 1139.0L1913.2 1109.7L1915.5 1136.2L1917.4 1164.2L1919.7 1173.9L1923.0 1180.9L1925.3 1146.0L1927.5 1148.8L1930.8 1139.0L1933.1 1155.8L1936.4 1140.4L1939.2 1119.4L1942.0 1104.1L1944.8 1088.7L1949.0 1064.9L1951.8 1071.9L1954.6 1060.2L1956.6 1112.4L1961.0 1120.0L1964.9 1085.9L1968.6 1105.5L1971.4 1126.4L1975.0 1150.2L1978.4 1104.1L1981.7 1098.5L1984.8 1081.7L1986.7 1136.2L1990.9 1135.6L1995.1 1108.3L1998.5 1088.7L2001.3 1082.5L2004.9 1092.9L2006.9 1087.3L2009.1 1113.8L2013.3 1130.6L2016.1 1116.6L2018.0 1125.0L2021.7 1173.9L2023.6 1178.1L2026.4 1171.1L2028.7 1150.2L2031.5 1150.2L2037.0 1132.9L2039.3 1161.4L2042.6 1168.3L2044.9 1208.9L2048.2 1211.7L2053.3 1214.5L2056.6 1231.2L2059.4 1185.1L2061.6 1208.9L2065.0 1207.5L2068.4 1178.1L2073.4 1211.7L2074.8 1190.7L2079.0 1187.9L2084.0 1201.0L2087.4 1198.3L2088.8 1162.8L2091.5 1155.8L2095.2 1162.8L2099.1 1241.0L2102.7 1239.6L2105.5 1207.5L2108.3 1211.7L2110.3 1221.4L2113.1 1199.1L2116.7 1203.3L2118.7 1211.7L2121.5 1236.8L2124.2 1248.0L2127.0 1267.0L2130.7 1250.8L2132.6 1227.0L2134.9 1231.2L2139.1 1199.1L2141.0 1228.4L2144.7 1203.3L2148.3 1183.7L2150.2 1182.3L2153.0 1183.7L2155.0 1179.5L2157.2 1162.8L2160.6 1154.4L2163.4 1143.2L2165.1 1141.2L2168.4 1161.4L2171.2 1180.9L2173.4 1185.1L2176.8 1178.1L2179.6 1168.3L2182.9 1134.0L2185.7 1147.4L2188.5 1148.8L2191.3 1149.6L2193.0 1178.1L2195.0 1238.2L2198.6 1213.1L2200.5 1199.1L2203.3 1222.8L2204.7 1238.2L2207.0 1224.2L2208.9 1242.4L2213.7 1253.0" stroke="#fce83a" stroke-width="3.600" fill="none" stroke-linejoin="round"/>
</g>
<rect x="141" y="1045" width="80" height="32" fill="#181c27" fill-opacity="0.55"/>
<text x="145.0" y="1069.0" font-size="26" fill="#b2b5be" stroke="#b2b5be" stroke-width="0.45" textLength="32.5" lengthAdjust="spacingAndGlyphs">RSI</text>
<text x="188.6" y="1069.0" font-size="26" fill="#787b86" stroke="#787b86" stroke-width="0.45" textLength="25.0" lengthAdjust="spacingAndGlyphs">14</text>
<text x="231.2" y="1069.0" font-size="26" fill="#ffeb3b" stroke="#ffeb3b" stroke-width="0.45" textLength="63.0" lengthAdjust="spacingAndGlyphs">39.14</text>
<text x="2744.0" y="975.2" font-size="24" fill="#b2b5be" stroke="#b2b5be" stroke-width="0.45" textLength="95.0" lengthAdjust="spacingAndGlyphs">24000.00</text>
<text x="2744.0" y="864.9" font-size="24" fill="#b2b5be" stroke="#b2b5be" stroke-width="0.45" textLength="95.0" lengthAdjust="spacingAndGlyphs">26000.00</text>
<text x="2744.0" y="754.7" font-size="24" fill="#b2b5be" stroke="#b2b5be" stroke-width="0.45" textLength="95.0" lengthAdjust="spacingAndGlyphs">28000.00</text>
<text x="2744.0" y="644.4" font-size="24" fill="#b2b5be" stroke="#b2b5be" stroke-width="0.45" textLength="95.0" lengthAdjust="spacingAndGlyphs">30000.00</text>
<text x="2744.0" y="313.6" font-size="24" fill="#b2b5be" stroke="#b2b5be" stroke-width="0.45" textLength="95.0" lengthAdjust="spacingAndGlyphs">36000.00</text>
<text x="2744.0" y="203.4" font-size="24" fill="#b2b5be" stroke="#b2b5be" stroke-width="0.45" textLength="95.0" lengthAdjust="spacingAndGlyphs" clip-path="url(#cpax)">38000.00</text>
<text x="2744.0" y="1066.3" font-size="24" fill="#b2b5be" stroke="#b2b5be" stroke-width="0.45" textLength="58.0" lengthAdjust="spacingAndGlyphs">80.00</text>
<text x="2744.0" y="1160.7" font-size="24" fill="#b2b5be" stroke="#b2b5be" stroke-width="0.45" textLength="58.0" lengthAdjust="spacingAndGlyphs">60.00</text>
<text x="2744.0" y="1255.0" font-size="24" fill="#b2b5be" stroke="#b2b5be" stroke-width="0.45" textLength="58.0" lengthAdjust="spacingAndGlyphs">40.00</text>
<path d="M2724 349h127a3 3 0 0 1 3 3v27.500a3 3 0 0 1 -3 3h-127z" fill="#ffeb3b"/>
<rect x="2725" y="365" width="9" height="2" fill="#4a4420"/>
<text x="2745.0" y="374.5" font-size="24" fill="#000000" stroke="#000000" stroke-width="0.45" textLength="95.0" lengthAdjust="spacingAndGlyphs">33975.35</text>
<path d="M2724 383h127a3 3 0 0 1 3 3v27.500a3 3 0 0 1 -3 3h-127z" fill="#ffeb3b"/>
<rect x="2725" y="399" width="9" height="2" fill="#4a4420"/>
<text x="2745.0" y="408.5" font-size="24" fill="#000000" stroke="#000000" stroke-width="0.45" textLength="95.0" lengthAdjust="spacingAndGlyphs">33330.60</text>
<path d="M2724 417h127a3 3 0 0 1 3 3v27.500a3 3 0 0 1 -3 3h-127z" fill="#ffeb3b"/>
<rect x="2725" y="433" width="9" height="2" fill="#4a4420"/>
<text x="2745.0" y="442.5" font-size="24" fill="#000000" stroke="#000000" stroke-width="0.45" textLength="95.0" lengthAdjust="spacingAndGlyphs">32931.73</text>
<path d="M2724 451h127a3 3 0 0 1 3 3v27.500a3 3 0 0 1 -3 3h-127z" fill="#ffeb3b"/>
<rect x="2725" y="467" width="9" height="2" fill="#4a4420"/>
<text x="2745.0" y="476.5" font-size="24" fill="#000000" stroke="#000000" stroke-width="0.45" textLength="95.0" lengthAdjust="spacingAndGlyphs">32609.35</text>
<path d="M2724 485h127a3 3 0 0 1 3 3v27.500a3 3 0 0 1 -3 3h-127z" fill="#ffeb3b"/>
<rect x="2725" y="501" width="9" height="2" fill="#4a4420"/>
<text x="2745.0" y="510.5" font-size="24" fill="#000000" stroke="#000000" stroke-width="0.45" textLength="95.0" lengthAdjust="spacingAndGlyphs">32286.97</text>
<path d="M2724 519.5h127a3 3 0 0 1 3 3v27.500a3 3 0 0 1 -3 3h-127z" fill="#ef5350"/>
<rect x="2725" y="535.5" width="9" height="2" fill="#ffffff"/>
<text x="2745.0" y="545.0" font-size="24" fill="#ffffff" stroke="#ffffff" stroke-width="0.45" textLength="95.0" lengthAdjust="spacingAndGlyphs">31813.82</text>
<path d="M2724 553.5h127a3 3 0 0 1 3 3v27.500a3 3 0 0 1 -3 3h-127z" fill="#ffeb3b"/>
<rect x="2725" y="569.5" width="9" height="2" fill="#4a4420"/>
<text x="2745.0" y="579.0" font-size="24" fill="#000000" stroke="#000000" stroke-width="0.45" textLength="95.0" lengthAdjust="spacingAndGlyphs">31243.35</text>
<path d="M2724 587.5h127a3 3 0 0 1 3 3v27.500a3 3 0 0 1 -3 3h-127z" fill="#ffeb3b"/>
<rect x="2725" y="603.5" width="9" height="2" fill="#4a4420"/>
<text x="2745.0" y="613.0" font-size="24" fill="#000000" stroke="#000000" stroke-width="0.45" textLength="95.0" lengthAdjust="spacingAndGlyphs">30715.00</text>
<text x="247.8" y="1374.5" font-size="24" fill="#c1c4cd" text-anchor="middle" font-weight="bold" textLength="53.0" lengthAdjust="spacingAndGlyphs">2021</text>
<text x="426.0" y="1374.5" font-size="24" fill="#b2b5be" stroke="#b2b5be" stroke-width="0.45" text-anchor="middle" textLength="36.5" lengthAdjust="spacingAndGlyphs">Apr</text>
<text x="601.5" y="1374.5" font-size="24" fill="#b2b5be" stroke="#b2b5be" stroke-width="0.45" text-anchor="middle" textLength="30.0" lengthAdjust="spacingAndGlyphs">Jul</text>
<text x="782.0" y="1374.5" font-size="24" fill="#b2b5be" stroke="#b2b5be" stroke-width="0.45" text-anchor="middle" textLength="36.5" lengthAdjust="spacingAndGlyphs">Oct</text>
<text x="963.0" y="1374.5" font-size="24" fill="#c1c4cd" text-anchor="middle" font-weight="bold" textLength="54.0" lengthAdjust="spacingAndGlyphs">2022</text>
<text x="1144.0" y="1374.5" font-size="24" fill="#b2b5be" stroke="#b2b5be" stroke-width="0.45" text-anchor="middle" textLength="36.5" lengthAdjust="spacingAndGlyphs">Apr</text>
<text x="1319.5" y="1374.5" font-size="24" fill="#b2b5be" stroke="#b2b5be" stroke-width="0.45" text-anchor="middle" textLength="30.0" lengthAdjust="spacingAndGlyphs">Jul</text>
<text x="1499.5" y="1374.5" font-size="24" fill="#b2b5be" stroke="#b2b5be" stroke-width="0.45" text-anchor="middle" textLength="36.5" lengthAdjust="spacingAndGlyphs">Oct</text>
<text x="1677.3" y="1374.5" font-size="24" fill="#c1c4cd" text-anchor="middle" font-weight="bold" textLength="54.0" lengthAdjust="spacingAndGlyphs">2023</text>
<text x="1858.0" y="1374.5" font-size="24" fill="#b2b5be" stroke="#b2b5be" stroke-width="0.45" text-anchor="middle" textLength="36.5" lengthAdjust="spacingAndGlyphs">Apr</text>
<text x="2035.8" y="1374.5" font-size="24" fill="#b2b5be" stroke="#b2b5be" stroke-width="0.45" text-anchor="middle" textLength="30.0" lengthAdjust="spacingAndGlyphs">Jul</text>
<text x="2213.8" y="1374.5" font-size="24" fill="#b2b5be" stroke="#b2b5be" stroke-width="0.45" text-anchor="middle" textLength="36.5" lengthAdjust="spacingAndGlyphs">Oct</text>
<text x="2394.7" y="1374.5" font-size="24" fill="#c1c4cd" text-anchor="middle" font-weight="bold" textLength="54.0" lengthAdjust="spacingAndGlyphs">2024</text>
<text x="2572.6" y="1374.5" font-size="24" fill="#b2b5be" stroke="#b2b5be" stroke-width="0.45" text-anchor="middle" textLength="36.5" lengthAdjust="spacingAndGlyphs">Apr</text>
<g fill="none" stroke="#787b86" stroke-width="2"><circle cx="2794" cy="1364" r="9.500"/><path d="M2794 1349v5M2794 1374v5M2779 1364h5M2804 1364h5M2783.400 1353.400l3.500 3.500M2801 1371l3.500 3.500M2783.400 1374.600l3.500-3.500M2801 1357l3.500-3.500"/></g>
<rect x="112.500" y="1301.500" width="16.500" height="51.500" rx="8" fill="#121622" stroke="#363a45" stroke-width="2"/>
<path d="M122.500 1321l-3.500 6.500 3.500 6.500" fill="none" stroke="#b2b5be" stroke-width="1.800"/>
<text x="158.4" y="1439.7" font-size="24" fill="#d1d4dc" textLength="124.0" lengthAdjust="spacingAndGlyphs">Powered by</text>
<text x="288.8" y="1439.7" font-size="24" fill="#2196f3" textLength="128.5" lengthAdjust="spacingAndGlyphs">TradingView</text>
<rect x="441.500" y="1394" width="2" height="71" fill="#2a2e39"/>
<text x="477.5" y="1442.0" font-size="28" fill="#787b86" stroke="#787b86" stroke-width="0.45" textLength="29.5" lengthAdjust="spacingAndGlyphs">1D</text>
<text x="536.6" y="1442.0" font-size="28" fill="#787b86" stroke="#787b86" stroke-width="0.45" textLength="30.5" lengthAdjust="spacingAndGlyphs">5D</text>
<text x="597.2" y="1442.0" font-size="28" fill="#787b86" stroke="#787b86" stroke-width="0.45" textLength="33.0" lengthAdjust="spacingAndGlyphs">1M</text>
<text x="659.2" y="1442.0" font-size="28" fill="#787b86" stroke="#787b86" stroke-width="0.45" textLength="33.5" lengthAdjust="spacingAndGlyphs">3M</text>
<text x="721.1" y="1442.0" font-size="28" fill="#787b86" stroke="#787b86" stroke-width="0.45" textLength="33.5" lengthAdjust="spacingAndGlyphs">6M</text>
<text x="784.9" y="1442.0" font-size="28" fill="#787b86" stroke="#787b86" stroke-width="0.45" textLength="28.0" lengthAdjust="spacingAndGlyphs">1Y</text>
<text x="843.2" y="1442.0" font-size="28" fill="#787b86" stroke="#787b86" stroke-width="0.45" textLength="28.0" lengthAdjust="spacingAndGlyphs">5Y</text>
<text x="901.4" y="1442.0" font-size="28" fill="#787b86" stroke="#787b86" stroke-width="0.45" textLength="32.0" lengthAdjust="spacingAndGlyphs">All</text>
<rect x="966.500" y="1411" width="2" height="42" fill="#2a2e39"/>
<g fill="none" stroke="#787b86" stroke-width="2"><path d="M1002 1430v-8a4 4 0 0 1 4-4h23a4 4 0 0 1 4 4v20a4 4 0 0 1-4 4h-12M1002 1426.500h31M1010 1414v6M1025 1414v6M1001 1437.500h17M1012.500 1431.500l6 6-6 6"/></g>
<text x="2380.2" y="1442.4" font-size="28" fill="#787b86" stroke="#787b86" stroke-width="0.45" textLength="217.0" lengthAdjust="spacingAndGlyphs">07:50:31 (UTC+2)</text>
<rect x="2631" y="1411" width="2" height="43" fill="#2a2e39"/>
<text x="2665.4" y="1442.4" font-size="28" fill="#787b86" stroke="#787b86" stroke-width="0.45" textLength="25.0" lengthAdjust="spacingAndGlyphs">%</text>
<text x="2721.4" y="1442.4" font-size="28" fill="#787b86" stroke="#787b86" stroke-width="0.45" textLength="35.5" lengthAdjust="spacingAndGlyphs">log</text>
<text x="2786.4" y="1442.4" font-size="28" fill="#787b86" stroke="#787b86" stroke-width="0.45" textLength="56.0" lengthAdjust="spacingAndGlyphs">auto</text>
<circle cx="2858.500" cy="1436" r="40" fill="#2a2f3b"/>
<path d="M2855.300 1421L2843 1435.800L2855.300 1450.700" fill="none" stroke="#4a90e2" stroke-width="4"/>
</svg>
</body></html>
